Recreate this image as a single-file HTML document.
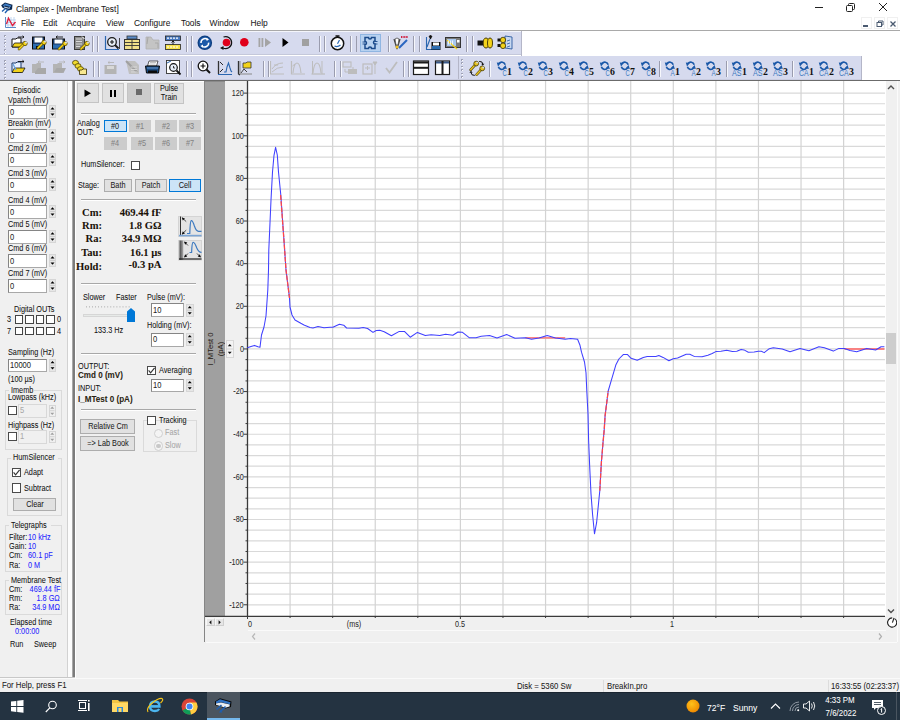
<!DOCTYPE html><html><head><meta charset="utf-8"><style>
*{margin:0;padding:0;box-sizing:border-box}
html,body{width:900px;height:720px;overflow:hidden;background:#f0f0f0;font-family:"Liberation Sans",sans-serif;color:#000;position:relative}
.a{position:absolute}
.t{position:absolute;white-space:nowrap;color:#111;-webkit-text-stroke:0.05px currentColor}

.spin{position:absolute;background:#e8e8e8;border:1px solid #d0d0d0}
.btn{position:absolute;background:#e1e1e1;border:1px solid #adadad}
.cb{position:absolute;background:#fff;border:1px solid #333}
.grp{position:absolute;border:1px solid #dcdcdc}
svg{position:absolute;overflow:visible}
</style></head><body>
<div class="a" style="left:0px;top:0px;width:900px;height:30px;background:#fff"></div>
<div class="a" style="left:0px;top:30px;width:900px;height:1px;background:#a9a9a9"></div>
<div class="a" style="left:0px;top:31px;width:900px;height:49px;background:#fff"></div>
<div class="a" style="left:0px;top:80px;width:900px;height:1px;background:#6b6b6b"></div>
<svg style="left:0;top:1px" width="14" height="13"><path d="M1.2 4.2 L5 1.5 L12.5 3.8 L12 8.5 L8.5 9.5 L2.5 6.8 Z" fill="#0e2a50"/><path d="M3 4.2 L5.5 2.6 L11.2 4.5 L10.8 6 L5 4.6 L3.6 5.4 Z" fill="#3f7fc8"/><path d="M4 6 L8.5 7.2 L10 6.8" stroke="#c8d8ea" stroke-width="1" fill="none"/><path d="M5.5 7.5 L2 10.5 M8 8.5 L5 12" stroke="#1f5fb0" stroke-width="1.4"/></svg>
<div class="t" style="left:16px;top:4.59px;font-size:8.4px;line-height:8.4px;transform-origin:left;color:#1a1a1a">Clampex - [Membrane Test]</div>
<div class="a" style="left:815px;top:7px;width:8px;height:1px;background:#222"></div>
<svg style="left:845px;top:2px" width="11" height="11"><rect x="1.5" y="3.5" width="6" height="6" rx="1" fill="none" stroke="#222" stroke-width="1"/><path d="M3.5 3.5 V2.5 Q3.5 1.5 4.5 1.5 H8.5 Q9.5 1.5 9.5 2.5 V6.5 Q9.5 7.5 8.5 7.5 H7.5" fill="none" stroke="#222" stroke-width="1"/></svg>
<svg style="left:878px;top:2px" width="10" height="10"><path d="M1 1 L9 9 M9 1 L1 9" stroke="#222" stroke-width="1"/></svg>
<div class="a" style="left:861px;top:17px;width:11px;height:12px;background:#fff;border:1px solid #f0f0f0"></div>
<div class="a" style="left:874px;top:17px;width:11px;height:12px;background:#fff;border:1px solid #f0f0f0"></div>
<div class="a" style="left:887px;top:17px;width:11px;height:12px;background:#fff;border:1px solid #f0f0f0"></div>
<div class="a" style="left:863px;top:25px;width:5px;height:1.5px;background:#4a5a70"></div>
<svg style="left:876px;top:20px" width="8" height="8"><rect x="1" y="2.5" width="4.5" height="4" fill="none" stroke="#4a5a70" stroke-width="1"/><path d="M2.5 2.5 V1 H7 V5 H5.5" fill="none" stroke="#4a5a70" stroke-width="1"/></svg>
<svg style="left:889px;top:20px" width="8" height="8"><path d="M1.5 1.5 L6.5 6.5 M6.5 1.5 L1.5 6.5" stroke="#4a5a70" stroke-width="1.3"/></svg>
<svg style="left:5px;top:17px" width="11" height="11"><path d="M0.5 0 V10.5 H11" stroke="#5a8ac8" stroke-width="1" fill="none"/><path d="M3 0 V10 M6 0 V10 M9 0 V10 M0.5 3 H11 M0.5 5.5 H11 M0.5 8 H11" stroke="#a8c4e8" stroke-width="0.7"/><path d="M1.5 7 L3.5 1.2 L7.5 8.5 L10.5 5" stroke="#e02040" stroke-width="1.3" fill="none"/></svg>
<div class="t" style="left:21px;top:19.09px;font-size:8.4px;line-height:8.4px;transform-origin:left;color:#1a1a1a">File</div>
<div class="t" style="left:43px;top:19.09px;font-size:8.4px;line-height:8.4px;transform-origin:left;color:#1a1a1a">Edit</div>
<div class="t" style="left:67px;top:19.09px;font-size:8.4px;line-height:8.4px;transform-origin:left;color:#1a1a1a">Acquire</div>
<div class="t" style="left:106px;top:19.09px;font-size:8.4px;line-height:8.4px;transform-origin:left;color:#1a1a1a">View</div>
<div class="t" style="left:134px;top:19.09px;font-size:8.4px;line-height:8.4px;transform-origin:left;color:#1a1a1a">Configure</div>
<div class="t" style="left:181px;top:19.09px;font-size:8.4px;line-height:8.4px;transform-origin:left;color:#1a1a1a">Tools</div>
<div class="t" style="left:209.5px;top:19.09px;font-size:8.4px;line-height:8.4px;transform-origin:left;color:#1a1a1a">Window</div>
<div class="t" style="left:250.5px;top:19.09px;font-size:8.4px;line-height:8.4px;transform-origin:left;color:#1a1a1a">Help</div>
<div class="a" style="left:0px;top:31px;width:521px;height:24px;background:#d6daee;border-top:1px solid #f4f5fb"></div>
<div class="a" style="left:0px;top:54px;width:521px;height:1px;background:#c4c8da"></div>
<div class="a" style="left:0px;top:55px;width:900px;height:1px;background:#fff"></div>
<div class="a" style="left:0px;top:56px;width:458px;height:23px;background:#d6daee"></div>
<div class="a" style="left:458px;top:56px;width:403px;height:23px;background:#d6daee"></div>
<div class="a" style="left:0px;top:79px;width:861px;height:1px;background:#c9cce0"></div>
<div class="a" style="left:4px;top:35.3px;width:1.5px;height:1.5px;background:#9fa2b6"></div>
<div class="a" style="left:4.8px;top:36.099999999999994px;width:1px;height:1px;background:#fff"></div>
<div class="a" style="left:4px;top:38.75px;width:1.5px;height:1.5px;background:#9fa2b6"></div>
<div class="a" style="left:4.8px;top:39.55px;width:1px;height:1px;background:#fff"></div>
<div class="a" style="left:4px;top:42.199999999999996px;width:1.5px;height:1.5px;background:#9fa2b6"></div>
<div class="a" style="left:4.8px;top:42.99999999999999px;width:1px;height:1px;background:#fff"></div>
<div class="a" style="left:4px;top:45.65px;width:1.5px;height:1.5px;background:#9fa2b6"></div>
<div class="a" style="left:4.8px;top:46.449999999999996px;width:1px;height:1px;background:#fff"></div>
<div class="a" style="left:4px;top:49.099999999999994px;width:1.5px;height:1.5px;background:#9fa2b6"></div>
<div class="a" style="left:4.8px;top:49.89999999999999px;width:1px;height:1px;background:#fff"></div>
<div class="a" style="left:4px;top:52.55px;width:1.5px;height:1.5px;background:#9fa2b6"></div>
<div class="a" style="left:4.8px;top:53.349999999999994px;width:1px;height:1px;background:#fff"></div>
<div class="a" style="left:4px;top:60.0px;width:1.5px;height:1.5px;background:#9fa2b6"></div>
<div class="a" style="left:4.8px;top:60.8px;width:1px;height:1px;background:#fff"></div>
<div class="a" style="left:4px;top:63.45px;width:1.5px;height:1.5px;background:#9fa2b6"></div>
<div class="a" style="left:4.8px;top:64.25px;width:1px;height:1px;background:#fff"></div>
<div class="a" style="left:4px;top:66.9px;width:1.5px;height:1.5px;background:#9fa2b6"></div>
<div class="a" style="left:4.8px;top:67.7px;width:1px;height:1px;background:#fff"></div>
<div class="a" style="left:4px;top:70.35px;width:1.5px;height:1.5px;background:#9fa2b6"></div>
<div class="a" style="left:4.8px;top:71.14999999999999px;width:1px;height:1px;background:#fff"></div>
<div class="a" style="left:4px;top:73.8px;width:1.5px;height:1.5px;background:#9fa2b6"></div>
<div class="a" style="left:4.8px;top:74.6px;width:1px;height:1px;background:#fff"></div>
<div class="a" style="left:4px;top:77.25px;width:1.5px;height:1.5px;background:#9fa2b6"></div>
<div class="a" style="left:4.8px;top:78.05px;width:1px;height:1px;background:#fff"></div>
<svg style="left:11px;top:35px" width="16" height="16"><path d="M1 4 H5 L6 3 H10 V12 H1 Z" fill="#fff" stroke="#111" stroke-width="1"/><path d="M1 12 L3.5 8 H13 L10.5 12 Z" fill="#f2d21a" stroke="#111" stroke-width="0.8"/><path d="M7 2 H13 M11.5 0.8 L13 2 L11.5 3.2" stroke="#111" stroke-width="0.9" fill="none"/><path d="M8 14 L13 9" stroke="#5a4a00" stroke-width="2.6" stroke-linecap="round"/><path d="M8 14 L13 9" stroke="#f4d41c" stroke-width="1.6" stroke-linecap="round"/><circle cx="14" cy="8.5" r="2.2" fill="#f4d41c" stroke="#5a4a00" stroke-width="0.8"/><circle cx="15" cy="7.5" r="1" fill="#d6daee"/></svg>
<svg style="left:32px;top:35px" width="16" height="16"><rect x="0.5" y="2" width="12" height="12" fill="#1a3a6a" stroke="#0a0a0a" stroke-width="1"/><rect x="2.5" y="2.5" width="8" height="5" fill="#fff"/><rect x="1" y="9" width="11" height="4.5" fill="#2c6cb0"/><rect x="4" y="11" width="4" height="3" fill="#0a0a0a"/><path d="M6 13 L11 8" stroke="#5a4a00" stroke-width="2.6" stroke-linecap="round"/><path d="M6 13 L11 8" stroke="#f4d41c" stroke-width="1.6" stroke-linecap="round"/><circle cx="12" cy="7.5" r="2.2" fill="#f4d41c" stroke="#5a4a00" stroke-width="0.8"/><circle cx="13" cy="6.5" r="1" fill="#d6daee"/></svg>
<svg style="left:52px;top:35px" width="16" height="16"><rect x="0.5" y="4" width="12" height="10" fill="#1a3a6a" stroke="#0a0a0a" stroke-width="1"/><rect x="2.5" y="4.5" width="8" height="4" fill="#fff"/><rect x="1" y="9.5" width="11" height="4" fill="#2c6cb0"/><path d="M4 2 H11 M5.5 0.8 L4 2 L5.5 3.2" stroke="#111" stroke-width="0.9" fill="none"/><path d="M7 14 L12 9" stroke="#5a4a00" stroke-width="2.6" stroke-linecap="round"/><path d="M7 14 L12 9" stroke="#f4d41c" stroke-width="1.6" stroke-linecap="round"/><circle cx="13" cy="8.5" r="2.2" fill="#f4d41c" stroke="#5a4a00" stroke-width="0.8"/><circle cx="14" cy="7.5" r="1" fill="#d6daee"/></svg>
<svg style="left:74px;top:35px" width="16" height="16"><rect x="0.5" y="1.5" width="10" height="13" fill="#8a8a8a" stroke="#3a3a3a" stroke-width="1"/><path d="M2 4 H8 M2 6.5 H8 M2 9 H8 M2 11.5 H6" stroke="#d8d8d8" stroke-width="1"/><path d="M8 1.5 L10.5 4" stroke="#fff" stroke-width="1"/><path d="M7 14 L12 9" stroke="#5a4a00" stroke-width="2.6" stroke-linecap="round"/><path d="M7 14 L12 9" stroke="#f4d41c" stroke-width="1.6" stroke-linecap="round"/><circle cx="13" cy="8.5" r="2.2" fill="#f4d41c" stroke="#5a4a00" stroke-width="0.8"/><circle cx="14" cy="7.5" r="1" fill="#d6daee"/></svg>
<div class="a" style="left:92px;top:36px;width:1px;height:16px;background:#9a9cae"></div>
<div class="a" style="left:93px;top:36px;width:1px;height:16px;background:#f6f7fc"></div>
<div class="a" style="left:97px;top:36px;width:1px;height:16px;background:#9a9cae"></div>
<div class="a" style="left:98px;top:36px;width:1px;height:16px;background:#f6f7fc"></div>
<svg style="left:104px;top:35px" width="16" height="16"><path d="M1.5 1 V14.5 H15" stroke="#2a66b0" stroke-width="1.2" fill="none"/><circle cx="8" cy="7" r="4.3" fill="#e8eef6" stroke="#1a1a1a" stroke-width="1.3"/><path d="M6 7 H10 M8 5 V9" stroke="#1a1a1a" stroke-width="1.1"/><path d="M11 10 L14.5 13.5" stroke="#1a1a1a" stroke-width="1.8"/><path d="M15.5 3 V14" stroke="#1a1a1a" stroke-width="0.8"/></svg>
<svg style="left:124px;top:35px" width="16" height="16"><rect x="3" y="1" width="10" height="3" fill="#5a8ac8" stroke="#333" stroke-width="0.8"/><rect x="0.5" y="4.5" width="15" height="10" fill="#f0e08a" stroke="#333" stroke-width="1"/><path d="M1 7.5 H15 M1 10.5 H15 M8 4.5 V14.5" stroke="#333" stroke-width="0.9"/></svg>
<svg style="left:145px;top:35px" width="16" height="16"><path d="M1 2 H6 L8 5 H14 V14 H1 Z" fill="#c4c4c4" stroke="#b0b0b0" stroke-width="0.8"/><path d="M3 2 L2 9 M10 8 H13 V13" stroke="#a8a8a8" stroke-width="1" fill="none"/></svg>
<svg style="left:165px;top:35px" width="16" height="16"><rect x="0.5" y="1" width="15" height="4.5" fill="#4a7ac0" stroke="#222" stroke-width="0.8"/><path d="M2 3.2 H14" stroke="#fff" stroke-width="1.2" stroke-dasharray="2 1"/><rect x="0.5" y="9.5" width="15" height="5" fill="#f6e04a" stroke="#222" stroke-width="0.8"/><path d="M2 12 H14" stroke="#fff" stroke-width="1.2" stroke-dasharray="2 1"/><path d="M8 5.5 V9.5 M6.5 7.5 L8 6 L9.5 7.5" stroke="#111" stroke-width="0.9" fill="none"/></svg>
<div class="a" style="left:186px;top:36px;width:1px;height:16px;background:#9a9cae"></div>
<div class="a" style="left:187px;top:36px;width:1px;height:16px;background:#f6f7fc"></div>
<div class="a" style="left:191px;top:36px;width:1px;height:16px;background:#9a9cae"></div>
<div class="a" style="left:192px;top:36px;width:1px;height:16px;background:#f6f7fc"></div>
<svg style="left:197px;top:35px" width="16" height="16"><circle cx="7.8" cy="7.8" r="7.3" fill="#0f3f80"/><circle cx="7.8" cy="7.8" r="6" fill="#1d5aa8"/><path d="M4 8 A4 4 0 0 1 10.5 4.5 M11.6 7.6 A4 4 0 0 1 5 11" stroke="#fff" stroke-width="1.5" fill="none"/><path d="M9.5 2.8 L12 4.5 L9.6 6 Z M6 9.6 L3.5 11 L6 12.8 Z" fill="#fff"/></svg>
<svg style="left:219px;top:35px" width="16" height="16"><circle cx="7.5" cy="7.5" r="3.8" fill="#e0001a"/><path d="M4.5 2 A6 6 0 1 1 4 13" stroke="#111" stroke-width="1.2" fill="none"/><path d="M1 13 L4.5 11 L4.5 15 Z" fill="#111"/></svg>
<svg style="left:239px;top:35px" width="16" height="16"><circle cx="5.3" cy="7.3" r="4.3" fill="#e0001a"/></svg>
<svg style="left:258px;top:35px" width="16" height="16"><rect x="0.5" y="3" width="1.8" height="9" fill="#a4a4a4"/><rect x="3.5" y="3" width="1.8" height="9" fill="#a4a4a4"/><path d="M7 3 L13 7.5 L7 12 Z" fill="#a4a4a4"/></svg>
<svg style="left:282px;top:35px" width="16" height="16"><path d="M0.5 3 L6.5 7.5 L0.5 12 Z" fill="#000"/></svg>
<svg style="left:301px;top:35px" width="16" height="16"><rect x="1" y="4" width="7" height="7" fill="#a0a0a0"/></svg>
<div class="a" style="left:319px;top:36px;width:1px;height:16px;background:#9a9cae"></div>
<div class="a" style="left:320px;top:36px;width:1px;height:16px;background:#f6f7fc"></div>
<div class="a" style="left:324px;top:36px;width:1px;height:16px;background:#9a9cae"></div>
<div class="a" style="left:325px;top:36px;width:1px;height:16px;background:#f6f7fc"></div>
<svg style="left:330px;top:35px" width="16" height="16"><circle cx="7.5" cy="8.5" r="6.2" fill="#fff" stroke="#111" stroke-width="1.5"/><path d="M5.5 1 H9.5 M7.5 1 V2.5" stroke="#111" stroke-width="1.3"/><path d="M7.5 8.8 L9.5 5 M4.5 11 Q7.5 12.5 10.5 10" stroke="#2a6ab8" stroke-width="1.2" fill="none"/></svg>
<div class="a" style="left:350px;top:36px;width:1px;height:16px;background:#9a9cae"></div>
<div class="a" style="left:351px;top:36px;width:1px;height:16px;background:#f6f7fc"></div>
<div class="a" style="left:356px;top:36px;width:1px;height:16px;background:#9a9cae"></div>
<div class="a" style="left:360px;top:33.6px;width:20.5px;height:18.5px;background:#b8d2f0;border:1px solid #90b6e2"></div>
<svg style="left:362px;top:35px" width="16" height="16"><path d="M3 2.5 H6.5 A1.5 1.5 0 0 0 9.5 2.5 H13 V6 A1.5 1.5 0 0 0 13 9 V13.5 H9.5 A1.5 1.5 0 0 0 6.5 13.5 H3 V9.5 A1.5 1.5 0 0 0 3 6.5 Z" fill="none" stroke="#1a4a8a" stroke-width="1.5"/><path d="M0.5 7 H3 M0.5 9 H3 M13 6.5 H15.5 M13 9 H15.5" stroke="#1a4a8a" stroke-width="0.9"/></svg>
<div class="a" style="left:388px;top:36px;width:1px;height:16px;background:#9a9cae"></div>
<div class="a" style="left:389px;top:36px;width:1px;height:16px;background:#f6f7fc"></div>
<svg style="left:393px;top:35px" width="16" height="16"><path d="M1 4 L4 14 M7 4 L4 14" stroke="#444" stroke-width="1.2" fill="none"/><path d="M2 4 Q4 2 6 4 L5 10 H3 Z" fill="#fff" stroke="#333" stroke-width="0.7"/><path d="M8 2 H15" stroke="#d02040" stroke-width="2" stroke-dasharray="1 0.6"/><path d="M6 13 L14 5" stroke="#2a66c0" stroke-width="2"/><circle cx="4" cy="12" r="1.5" fill="#f0c020"/></svg>
<div class="a" style="left:413px;top:36px;width:1px;height:16px;background:#9a9cae"></div>
<div class="a" style="left:414px;top:36px;width:1px;height:16px;background:#f6f7fc"></div>
<div class="a" style="left:419px;top:36px;width:1px;height:16px;background:#9a9cae"></div>
<div class="a" style="left:420px;top:36px;width:1px;height:16px;background:#f6f7fc"></div>
<svg style="left:425px;top:35px" width="16" height="16"><path d="M1.5 2 V14.5 H7" stroke="#2a66b0" stroke-width="1.1" fill="none"/><path d="M2 12 L5 4" stroke="#2a66b0" stroke-width="1.1"/><path d="M4 1 L7 1 L5.5 4Z M5.5 0 V4" stroke="#111" stroke-width="0.8" fill="#111"/><rect x="6.5" y="7" width="9" height="8" fill="#0a0a0a"/><rect x="8" y="7.5" width="6" height="3" fill="#fff"/><rect x="7" y="11" width="8" height="3.5" fill="#2c6cb0"/></svg>
<svg style="left:445px;top:35px" width="16" height="16"><rect x="0.5" y="2.5" width="15" height="10" fill="#7a7a7a" stroke="#333" stroke-width="1"/><rect x="2" y="4" width="9" height="7" fill="#a8c8f0"/><rect x="12" y="5" width="2.5" height="2.5" fill="#fff"/><path d="M2 5 L12 14" stroke="#f2d01a" stroke-width="1.3"/><path d="M3.5 5.5 V9.5 M5.5 5.5 V9.5 M7.5 5.5 V9.5" stroke="#fff" stroke-width="0.8"/></svg>
<div class="a" style="left:466px;top:36px;width:1px;height:16px;background:#9a9cae"></div>
<div class="a" style="left:467px;top:36px;width:1px;height:16px;background:#f6f7fc"></div>
<div class="a" style="left:472px;top:36px;width:1px;height:16px;background:#9a9cae"></div>
<div class="a" style="left:473px;top:36px;width:1px;height:16px;background:#f6f7fc"></div>
<svg style="left:477px;top:35px" width="16" height="16"><rect x="0.5" y="5.5" width="6" height="5" fill="#111"/><ellipse cx="9" cy="8" rx="2.8" ry="5" fill="#f2d21a" stroke="#3a3000" stroke-width="0.9"/><ellipse cx="13" cy="8" rx="2.5" ry="5" fill="#f2d21a" stroke="#3a3000" stroke-width="0.9"/></svg>
<svg style="left:497px;top:35px" width="16" height="16"><path d="M8 1 L15 2 V14 L8 13 Z" fill="#c8d8f0" stroke="#2a5aa0" stroke-width="0.9"/><path d="M10 6 L13 5 M10 9 L13 8 M10 12 L13 11" stroke="#2a5aa0" stroke-width="0.8"/><rect x="0.5" y="3.5" width="3" height="3" fill="#111"/><rect x="0.5" y="9" width="3" height="3" fill="#111"/><ellipse cx="6" cy="5" rx="2.6" ry="2.8" fill="#f2d21a" stroke="#3a3000" stroke-width="0.8"/><ellipse cx="6" cy="10.8" rx="2.6" ry="2.8" fill="#f2d21a" stroke="#3a3000" stroke-width="0.8"/></svg>
<div class="a" style="left:521px;top:31px;width:1px;height:25px;background:#b4b6c8"></div>
<svg style="left:11px;top:60px" width="16" height="16"><path d="M1 3 H5 L6 2 H10 V12 H1 Z" fill="#e6f0ff" stroke="#1a3a6a" stroke-width="1"/><path d="M1 12.5 L3.5 8 H14 L11.5 12.5 Z" fill="#f2d21a" stroke="#111" stroke-width="0.8"/><path d="M7 1.5 H13 M11.5 0.3 L13 1.5 L11.5 2.7" stroke="#111" stroke-width="0.9" fill="none"/><path d="M2 4 L5 10" stroke="#6aa0e0" stroke-width="1.4"/></svg>
<svg style="left:31px;top:60px" width="16" height="16"><path d="M1 4 H5 L6 3 H10 V13 H1 Z" fill="#b4b4b4"/><path d="M4 12 L7 8 H15 V14 H4Z" fill="#a8a8a8"/><path d="M7 2 H13 M8.5 0.8 L7 2 L8.5 3.2" stroke="#b4b4b4" stroke-width="0.9" fill="none"/></svg>
<svg style="left:52px;top:60px" width="16" height="16"><path d="M1 4 H5 L6 3 H10 V13 H1 Z" fill="#b4b4b4"/><path d="M2 12 L4.5 8 H14 L11.5 13 Z" fill="#a8a8a8"/><path d="M7 2 H13 M11.5 0.8 L13 2 L11.5 3.2" stroke="#b4b4b4" stroke-width="0.9" fill="none"/></svg>
<svg style="left:72px;top:60px" width="16" height="16"><ellipse cx="3.5" cy="2.8" rx="3" ry="2.4" fill="#f2dc30" stroke="#4a4000" stroke-width="0.8"/><ellipse cx="6" cy="6" rx="3" ry="2.4" fill="#f2dc30" stroke="#4a4000" stroke-width="0.8"/><ellipse cx="8.5" cy="9" rx="3" ry="2.4" fill="#f2dc30" stroke="#4a4000" stroke-width="0.8"/><path d="M7.5 10 H10 L11 9 H14.5 V14.5 H7.5 Z" fill="#f8e890" stroke="#3a3000" stroke-width="0.8"/></svg>
<div class="a" style="left:93px;top:61px;width:1px;height:16px;background:#9a9cae"></div>
<div class="a" style="left:94px;top:61px;width:1px;height:16px;background:#f6f7fc"></div>
<div class="a" style="left:98px;top:61px;width:1px;height:16px;background:#9a9cae"></div>
<div class="a" style="left:99px;top:61px;width:1px;height:16px;background:#f6f7fc"></div>
<svg style="left:104px;top:60px" width="16" height="16"><rect x="0.5" y="5" width="12" height="9" fill="#b4b4b4"/><rect x="3" y="6" width="7" height="3" fill="#d8d8d8"/><path d="M4 2.5 H10 M5.5 1.3 L4 2.5 L5.5 3.7" stroke="#b4b4b4" stroke-width="0.9" fill="none"/></svg>
<svg style="left:125px;top:60px" width="16" height="16"><path d="M1 1 L10 1 L14 5 V14 H4 Z" fill="#c0c0c0"/><path d="M1 1 L12 12" stroke="#a0a0a0" stroke-width="2"/><path d="M6 7 H12 M6 9.5 H12 M6 12 H12" stroke="#dadada" stroke-width="0.9"/></svg>
<svg style="left:145px;top:60px" width="16" height="16"><path d="M4 1 H13 L11.5 6 H2.5 Z" fill="#fff" stroke="#333" stroke-width="0.8"/><path d="M5 2.5 H11 M4.5 4 H10.5" stroke="#999" stroke-width="0.6"/><path d="M0.5 6 H14.5 L13.5 13 H1.5 Z" fill="#1a4a80" stroke="#0a0a0a" stroke-width="1"/><rect x="3" y="10.5" width="9" height="2.5" fill="#0a0a0a"/><path d="M2 8 H13" stroke="#6a9ad0" stroke-width="1"/></svg>
<svg style="left:166px;top:60px" width="16" height="16"><rect x="0.5" y="0.5" width="13" height="13" fill="#fff" stroke="#333" stroke-width="0.9"/><path d="M1 3 L5 1" stroke="#2a66b0" stroke-width="1"/><circle cx="7.5" cy="7.5" r="3.8" fill="#e6eef8" stroke="#111" stroke-width="1.2"/><path d="M7.5 6 V8 H9" stroke="#111" stroke-width="0.8" fill="none"/><path d="M10.5 10.5 L14.5 14.5" stroke="#111" stroke-width="1.8"/></svg>
<div class="a" style="left:186px;top:61px;width:1px;height:16px;background:#9a9cae"></div>
<div class="a" style="left:187px;top:61px;width:1px;height:16px;background:#f6f7fc"></div>
<div class="a" style="left:191px;top:61px;width:1px;height:16px;background:#9a9cae"></div>
<div class="a" style="left:192px;top:61px;width:1px;height:16px;background:#f6f7fc"></div>
<svg style="left:197px;top:60px" width="16" height="16"><circle cx="6" cy="6" r="4.8" fill="#fff" stroke="#111" stroke-width="1.3"/><path d="M3.5 6 H8.5 M6 3.5 V8.5" stroke="#111" stroke-width="1.2"/><path d="M9.5 9.5 L13 13" stroke="#111" stroke-width="2"/></svg>
<svg style="left:217px;top:60px" width="16" height="16"><path d="M1.5 1 V14" stroke="#333" stroke-width="1.3"/><path d="M3 2 L6 5 M3 12 L6 9" stroke="#111" stroke-width="0.9"/><path d="M7 12 L9 12 L10 7 L11.5 3 L13 8 L14 11 L15 12" stroke="#2a66b0" stroke-width="1.1" fill="none"/><path d="M1 14.5 H15" stroke="#2a66b0" stroke-width="1"/></svg>
<svg style="left:237px;top:60px" width="16" height="16"><path d="M1.5 1 V14 L3 15" stroke="#333" stroke-width="1.3" fill="none"/><path d="M3 1 V14 H15" stroke="#8a8a8a" stroke-width="1" fill="none"/><path d="M6 3 H9 L10 2 H14 V8 H6 Z" fill="#f2d21a" stroke="#333" stroke-width="0.8"/><path d="M4 13 L7 9 L10 12" stroke="#333" stroke-width="0.9" fill="none"/></svg>
<div class="a" style="left:263px;top:61px;width:1px;height:16px;background:#9a9cae"></div>
<div class="a" style="left:264px;top:61px;width:1px;height:16px;background:#f6f7fc"></div>
<div class="a" style="left:268px;top:61px;width:1px;height:16px;background:#9a9cae"></div>
<div class="a" style="left:269px;top:61px;width:1px;height:16px;background:#f6f7fc"></div>
<svg style="left:269px;top:60px" width="16" height="16"><path d="M1.5 1 V14 H15" stroke="#bdbdbd" stroke-width="1.2" fill="none"/><path d="M3 9 Q7 3 14 3 M3 12 Q8 7 14 7 M5 5 H9" stroke="#bdbdbd" stroke-width="1" fill="none"/></svg>
<svg style="left:290px;top:60px" width="16" height="16"><path d="M1.5 1 V14 H15" stroke="#bdbdbd" stroke-width="1.2" fill="none"/><path d="M3 13 Q4 3 7 3 Q10 3 11 13" stroke="#bdbdbd" stroke-width="1.1" fill="none"/><path d="M2.5 6 L5 4" stroke="#bdbdbd" stroke-width="1"/></svg>
<svg style="left:310px;top:60px" width="16" height="16"><path d="M1.5 14 H15" stroke="#bdbdbd" stroke-width="1.2" fill="none"/><path d="M3 13 Q4 3 7 3 Q10 3 11 13" stroke="#bdbdbd" stroke-width="1.1" fill="none"/><path d="M2.5 1 V14 M12 1 V14" stroke="#bdbdbd" stroke-width="1"/></svg>
<div class="a" style="left:334px;top:61px;width:1px;height:16px;background:#9a9cae"></div>
<div class="a" style="left:335px;top:61px;width:1px;height:16px;background:#f6f7fc"></div>
<div class="a" style="left:340px;top:61px;width:1px;height:16px;background:#9a9cae"></div>
<div class="a" style="left:341px;top:61px;width:1px;height:16px;background:#f6f7fc"></div>
<svg style="left:342px;top:60px" width="16" height="16"><rect x="1" y="2" width="8" height="5" fill="none" stroke="#bdbdbd" stroke-width="1.1"/><rect x="6" y="9" width="9" height="5" fill="#bdbdbd"/><path d="M11 7 V9 M3 9 V12 H6" stroke="#bdbdbd" stroke-width="1" fill="none"/></svg>
<svg style="left:362px;top:60px" width="16" height="16"><rect x="1" y="4" width="9" height="10" fill="none" stroke="#bdbdbd" stroke-width="1.2"/><path d="M3 8 H8 M5.5 6 V10" stroke="#bdbdbd" stroke-width="1"/><path d="M11 2 H15 L13 5 Z M13 5 V14" stroke="#bdbdbd" stroke-width="1" fill="#bdbdbd"/></svg>
<svg style="left:385px;top:60px" width="16" height="16"><path d="M1 8 L4.5 12.5 L12 2" stroke="#bdbdbd" stroke-width="1.8" fill="none"/></svg>
<div class="a" style="left:403px;top:61px;width:1px;height:16px;background:#9a9cae"></div>
<div class="a" style="left:404px;top:61px;width:1px;height:16px;background:#f6f7fc"></div>
<div class="a" style="left:408px;top:61px;width:1px;height:16px;background:#9a9cae"></div>
<div class="a" style="left:409px;top:61px;width:1px;height:16px;background:#f6f7fc"></div>
<svg style="left:413px;top:60px" width="16" height="16"><rect x="0.5" y="1" width="15" height="13.5" fill="#fff" stroke="#1a1a1a" stroke-width="1.2"/><rect x="1" y="1.5" width="14" height="2" fill="#1a1a1a"/><path d="M0.5 7.8 H15.5" stroke="#1a1a1a" stroke-width="2"/></svg>
<svg style="left:435px;top:60px" width="16" height="16"><rect x="0.5" y="1" width="14" height="13.5" fill="#fff" stroke="#1a1a1a" stroke-width="1.2"/><rect x="1" y="1.5" width="13" height="2" fill="#3a5a8a"/><path d="M7.5 1 V14.5" stroke="#1a1a1a" stroke-width="2"/></svg>
<div class="a" style="left:458px;top:56px;width:1px;height:23px;background:#b4b6c8"></div>
<div class="a" style="left:461px;top:59.0px;width:1.5px;height:1.5px;background:#9fa2b6"></div>
<div class="a" style="left:461.8px;top:59.8px;width:1px;height:1px;background:#fff"></div>
<div class="a" style="left:461px;top:62.45px;width:1.5px;height:1.5px;background:#9fa2b6"></div>
<div class="a" style="left:461.8px;top:63.25px;width:1px;height:1px;background:#fff"></div>
<div class="a" style="left:461px;top:65.9px;width:1.5px;height:1.5px;background:#9fa2b6"></div>
<div class="a" style="left:461.8px;top:66.7px;width:1px;height:1px;background:#fff"></div>
<div class="a" style="left:461px;top:69.35px;width:1.5px;height:1.5px;background:#9fa2b6"></div>
<div class="a" style="left:461.8px;top:70.15px;width:1px;height:1px;background:#fff"></div>
<div class="a" style="left:461px;top:72.8px;width:1.5px;height:1.5px;background:#9fa2b6"></div>
<div class="a" style="left:461.8px;top:73.6px;width:1px;height:1px;background:#fff"></div>
<div class="a" style="left:461px;top:76.25px;width:1.5px;height:1.5px;background:#9fa2b6"></div>
<div class="a" style="left:461.8px;top:77.05px;width:1px;height:1px;background:#fff"></div>
<svg style="left:469px;top:60px" width="16" height="16"><path d="M1.6 9.8 L6.4 4.6 M7.6 14.6 L12.4 9.4" stroke="#4a3c00" stroke-width="2.6" stroke-linecap="round"/><path d="M1.6 9.8 L6.4 4.6 M7.6 14.6 L12.4 9.4" stroke="#e6c422" stroke-width="1.5" stroke-linecap="round"/><circle cx="7.2" cy="3.6" r="2.4" fill="#e6c422" stroke="#4a3c00" stroke-width="0.8"/><circle cx="13.2" cy="8.4" r="2.4" fill="#e6c422" stroke="#4a3c00" stroke-width="0.8"/><circle cx="8.1" cy="2.6" r="0.9" fill="#d6daee"/><circle cx="14.1" cy="7.4" r="0.9" fill="#d6daee"/><path d="M10.2 1.4 Q13.6 1.2 13.8 4" stroke="#111" stroke-width="1" fill="none"/><path d="M12.2 3.8 L15.4 3.8 L13.8 5.8 Z" fill="#111"/><path d="M5.8 15.4 Q2.2 15.6 2 12.6" stroke="#111" stroke-width="1" fill="none"/><path d="M0.4 12.8 L3.6 12.8 L2 10.8 Z" fill="#111"/></svg>
<div class="a" style="left:489px;top:61px;width:1px;height:16px;background:#9a9cae"></div>
<div class="a" style="left:490px;top:61px;width:1px;height:16px;background:#f6f7fc"></div>
<svg style="left:496.0px;top:60px" width="20" height="16"><path d="M9.2 4.8 A3.5 3.5 0 0 0 3 3.6 M2.4 6.8 A3.5 3.5 0 0 0 8.6 8" stroke="#1a58a8" stroke-width="1.6" fill="none"/><path d="M0.8 2.4 L4.9 3.1 L2 6.5 Z M10.8 9 L6.7 8.3 L9.6 4.9 Z" fill="#1a58a8"/><text x="6.6" y="15.5" font-family="Liberation Sans" font-size="8.2" fill="#3a78c0" textLength="4.2" lengthAdjust="spacingAndGlyphs">C</text><text x="10.9" y="15.2" font-family="Liberation Serif" font-size="9.8" font-weight="bold" fill="#111">1</text></svg>
<svg style="left:516.5px;top:60px" width="20" height="16"><path d="M9.2 4.8 A3.5 3.5 0 0 0 3 3.6 M2.4 6.8 A3.5 3.5 0 0 0 8.6 8" stroke="#1a58a8" stroke-width="1.6" fill="none"/><path d="M0.8 2.4 L4.9 3.1 L2 6.5 Z M10.8 9 L6.7 8.3 L9.6 4.9 Z" fill="#1a58a8"/><text x="6.6" y="15.5" font-family="Liberation Sans" font-size="8.2" fill="#3a78c0" textLength="4.2" lengthAdjust="spacingAndGlyphs">C</text><text x="10.9" y="15.2" font-family="Liberation Serif" font-size="9.8" font-weight="bold" fill="#111">2</text></svg>
<svg style="left:537.0px;top:60px" width="20" height="16"><path d="M9.2 4.8 A3.5 3.5 0 0 0 3 3.6 M2.4 6.8 A3.5 3.5 0 0 0 8.6 8" stroke="#1a58a8" stroke-width="1.6" fill="none"/><path d="M0.8 2.4 L4.9 3.1 L2 6.5 Z M10.8 9 L6.7 8.3 L9.6 4.9 Z" fill="#1a58a8"/><text x="6.6" y="15.5" font-family="Liberation Sans" font-size="8.2" fill="#3a78c0" textLength="4.2" lengthAdjust="spacingAndGlyphs">C</text><text x="10.9" y="15.2" font-family="Liberation Serif" font-size="9.8" font-weight="bold" fill="#111">3</text></svg>
<svg style="left:557.5px;top:60px" width="20" height="16"><path d="M9.2 4.8 A3.5 3.5 0 0 0 3 3.6 M2.4 6.8 A3.5 3.5 0 0 0 8.6 8" stroke="#1a58a8" stroke-width="1.6" fill="none"/><path d="M0.8 2.4 L4.9 3.1 L2 6.5 Z M10.8 9 L6.7 8.3 L9.6 4.9 Z" fill="#1a58a8"/><text x="6.6" y="15.5" font-family="Liberation Sans" font-size="8.2" fill="#3a78c0" textLength="4.2" lengthAdjust="spacingAndGlyphs">C</text><text x="10.9" y="15.2" font-family="Liberation Serif" font-size="9.8" font-weight="bold" fill="#111">4</text></svg>
<svg style="left:578.0px;top:60px" width="20" height="16"><path d="M9.2 4.8 A3.5 3.5 0 0 0 3 3.6 M2.4 6.8 A3.5 3.5 0 0 0 8.6 8" stroke="#1a58a8" stroke-width="1.6" fill="none"/><path d="M0.8 2.4 L4.9 3.1 L2 6.5 Z M10.8 9 L6.7 8.3 L9.6 4.9 Z" fill="#1a58a8"/><text x="6.6" y="15.5" font-family="Liberation Sans" font-size="8.2" fill="#3a78c0" textLength="4.2" lengthAdjust="spacingAndGlyphs">C</text><text x="10.9" y="15.2" font-family="Liberation Serif" font-size="9.8" font-weight="bold" fill="#111">5</text></svg>
<svg style="left:598.5px;top:60px" width="20" height="16"><path d="M9.2 4.8 A3.5 3.5 0 0 0 3 3.6 M2.4 6.8 A3.5 3.5 0 0 0 8.6 8" stroke="#1a58a8" stroke-width="1.6" fill="none"/><path d="M0.8 2.4 L4.9 3.1 L2 6.5 Z M10.8 9 L6.7 8.3 L9.6 4.9 Z" fill="#1a58a8"/><text x="6.6" y="15.5" font-family="Liberation Sans" font-size="8.2" fill="#3a78c0" textLength="4.2" lengthAdjust="spacingAndGlyphs">C</text><text x="10.9" y="15.2" font-family="Liberation Serif" font-size="9.8" font-weight="bold" fill="#111">6</text></svg>
<svg style="left:619.0px;top:60px" width="20" height="16"><path d="M9.2 4.8 A3.5 3.5 0 0 0 3 3.6 M2.4 6.8 A3.5 3.5 0 0 0 8.6 8" stroke="#1a58a8" stroke-width="1.6" fill="none"/><path d="M0.8 2.4 L4.9 3.1 L2 6.5 Z M10.8 9 L6.7 8.3 L9.6 4.9 Z" fill="#1a58a8"/><text x="6.6" y="15.5" font-family="Liberation Sans" font-size="8.2" fill="#3a78c0" textLength="4.2" lengthAdjust="spacingAndGlyphs">C</text><text x="10.9" y="15.2" font-family="Liberation Serif" font-size="9.8" font-weight="bold" fill="#111">7</text></svg>
<svg style="left:639.5px;top:60px" width="20" height="16"><path d="M9.2 4.8 A3.5 3.5 0 0 0 3 3.6 M2.4 6.8 A3.5 3.5 0 0 0 8.6 8" stroke="#1a58a8" stroke-width="1.6" fill="none"/><path d="M0.8 2.4 L4.9 3.1 L2 6.5 Z M10.8 9 L6.7 8.3 L9.6 4.9 Z" fill="#1a58a8"/><text x="6.6" y="15.5" font-family="Liberation Sans" font-size="8.2" fill="#3a78c0" textLength="4.2" lengthAdjust="spacingAndGlyphs">C</text><text x="10.9" y="15.2" font-family="Liberation Serif" font-size="9.8" font-weight="bold" fill="#111">8</text></svg>
<div class="a" style="left:659px;top:61px;width:1px;height:16px;background:#9a9cae"></div>
<div class="a" style="left:660px;top:61px;width:1px;height:16px;background:#f6f7fc"></div>
<svg style="left:664.0px;top:60px" width="20" height="16"><path d="M9.2 4.8 A3.5 3.5 0 0 0 3 3.6 M2.4 6.8 A3.5 3.5 0 0 0 8.6 8" stroke="#1a58a8" stroke-width="1.6" fill="none"/><path d="M0.8 2.4 L4.9 3.1 L2 6.5 Z M10.8 9 L6.7 8.3 L9.6 4.9 Z" fill="#1a58a8"/><text x="6.6" y="15.5" font-family="Liberation Sans" font-size="8.2" fill="#3a78c0" textLength="4.2" lengthAdjust="spacingAndGlyphs">A</text><text x="10.9" y="15.2" font-family="Liberation Serif" font-size="9.8" font-weight="bold" fill="#111">1</text></svg>
<svg style="left:684.7px;top:60px" width="20" height="16"><path d="M9.2 4.8 A3.5 3.5 0 0 0 3 3.6 M2.4 6.8 A3.5 3.5 0 0 0 8.6 8" stroke="#1a58a8" stroke-width="1.6" fill="none"/><path d="M0.8 2.4 L4.9 3.1 L2 6.5 Z M10.8 9 L6.7 8.3 L9.6 4.9 Z" fill="#1a58a8"/><text x="6.6" y="15.5" font-family="Liberation Sans" font-size="8.2" fill="#3a78c0" textLength="4.2" lengthAdjust="spacingAndGlyphs">A</text><text x="10.9" y="15.2" font-family="Liberation Serif" font-size="9.8" font-weight="bold" fill="#111">2</text></svg>
<svg style="left:705.4px;top:60px" width="20" height="16"><path d="M9.2 4.8 A3.5 3.5 0 0 0 3 3.6 M2.4 6.8 A3.5 3.5 0 0 0 8.6 8" stroke="#1a58a8" stroke-width="1.6" fill="none"/><path d="M0.8 2.4 L4.9 3.1 L2 6.5 Z M10.8 9 L6.7 8.3 L9.6 4.9 Z" fill="#1a58a8"/><text x="6.6" y="15.5" font-family="Liberation Sans" font-size="8.2" fill="#3a78c0" textLength="4.2" lengthAdjust="spacingAndGlyphs">A</text><text x="10.9" y="15.2" font-family="Liberation Serif" font-size="9.8" font-weight="bold" fill="#111">3</text></svg>
<div class="a" style="left:726px;top:61px;width:1px;height:16px;background:#9a9cae"></div>
<div class="a" style="left:727px;top:61px;width:1px;height:16px;background:#f6f7fc"></div>
<svg style="left:731.0px;top:60px" width="20" height="16"><path d="M9.2 4.8 A3.5 3.5 0 0 0 3 3.6 M2.4 6.8 A3.5 3.5 0 0 0 8.6 8" stroke="#1a58a8" stroke-width="1.6" fill="none"/><path d="M0.8 2.4 L4.9 3.1 L2 6.5 Z M10.8 9 L6.7 8.3 L9.6 4.9 Z" fill="#1a58a8"/><text x="1" y="15.5" font-family="Liberation Sans" font-size="8.2" fill="#3a78c0" textLength="9.6" lengthAdjust="spacingAndGlyphs">AS</text><text x="10.9" y="15.2" font-family="Liberation Serif" font-size="9.8" font-weight="bold" fill="#111">1</text></svg>
<svg style="left:751.5px;top:60px" width="20" height="16"><path d="M9.2 4.8 A3.5 3.5 0 0 0 3 3.6 M2.4 6.8 A3.5 3.5 0 0 0 8.6 8" stroke="#1a58a8" stroke-width="1.6" fill="none"/><path d="M0.8 2.4 L4.9 3.1 L2 6.5 Z M10.8 9 L6.7 8.3 L9.6 4.9 Z" fill="#1a58a8"/><text x="1" y="15.5" font-family="Liberation Sans" font-size="8.2" fill="#3a78c0" textLength="9.6" lengthAdjust="spacingAndGlyphs">AS</text><text x="10.9" y="15.2" font-family="Liberation Serif" font-size="9.8" font-weight="bold" fill="#111">2</text></svg>
<svg style="left:772.0px;top:60px" width="20" height="16"><path d="M9.2 4.8 A3.5 3.5 0 0 0 3 3.6 M2.4 6.8 A3.5 3.5 0 0 0 8.6 8" stroke="#1a58a8" stroke-width="1.6" fill="none"/><path d="M0.8 2.4 L4.9 3.1 L2 6.5 Z M10.8 9 L6.7 8.3 L9.6 4.9 Z" fill="#1a58a8"/><text x="1" y="15.5" font-family="Liberation Sans" font-size="8.2" fill="#3a78c0" textLength="9.6" lengthAdjust="spacingAndGlyphs">AS</text><text x="10.9" y="15.2" font-family="Liberation Serif" font-size="9.8" font-weight="bold" fill="#111">3</text></svg>
<div class="a" style="left:792px;top:61px;width:1px;height:16px;background:#9a9cae"></div>
<div class="a" style="left:793px;top:61px;width:1px;height:16px;background:#f6f7fc"></div>
<svg style="left:798.0px;top:60px" width="20" height="16"><path d="M9.2 4.8 A3.5 3.5 0 0 0 3 3.6 M2.4 6.8 A3.5 3.5 0 0 0 8.6 8" stroke="#1a58a8" stroke-width="1.6" fill="none"/><path d="M0.8 2.4 L4.9 3.1 L2 6.5 Z M10.8 9 L6.7 8.3 L9.6 4.9 Z" fill="#1a58a8"/><text x="1" y="15.5" font-family="Liberation Sans" font-size="8.2" fill="#3a78c0" textLength="9.6" lengthAdjust="spacingAndGlyphs">CA</text><text x="10.9" y="15.2" font-family="Liberation Serif" font-size="9.8" font-weight="bold" fill="#111">1</text></svg>
<svg style="left:818.2px;top:60px" width="20" height="16"><path d="M9.2 4.8 A3.5 3.5 0 0 0 3 3.6 M2.4 6.8 A3.5 3.5 0 0 0 8.6 8" stroke="#1a58a8" stroke-width="1.6" fill="none"/><path d="M0.8 2.4 L4.9 3.1 L2 6.5 Z M10.8 9 L6.7 8.3 L9.6 4.9 Z" fill="#1a58a8"/><text x="1" y="15.5" font-family="Liberation Sans" font-size="8.2" fill="#3a78c0" textLength="9.6" lengthAdjust="spacingAndGlyphs">CA</text><text x="10.9" y="15.2" font-family="Liberation Serif" font-size="9.8" font-weight="bold" fill="#111">2</text></svg>
<svg style="left:838.4px;top:60px" width="20" height="16"><path d="M9.2 4.8 A3.5 3.5 0 0 0 3 3.6 M2.4 6.8 A3.5 3.5 0 0 0 8.6 8" stroke="#1a58a8" stroke-width="1.6" fill="none"/><path d="M0.8 2.4 L4.9 3.1 L2 6.5 Z M10.8 9 L6.7 8.3 L9.6 4.9 Z" fill="#1a58a8"/><text x="1" y="15.5" font-family="Liberation Sans" font-size="8.2" fill="#3a78c0" textLength="9.6" lengthAdjust="spacingAndGlyphs">CA</text><text x="10.9" y="15.2" font-family="Liberation Serif" font-size="9.8" font-weight="bold" fill="#111">3</text></svg>
<div class="a" style="left:861px;top:56px;width:1px;height:24px;background:#b4b6c8"></div>
<div class="a" style="left:0px;top:81px;width:67px;height:597px;background:#f0f0f0"></div>
<div class="a" style="left:67px;top:81px;width:1px;height:597px;background:#d2d2d2"></div>
<div class="a" style="left:68px;top:81px;width:4px;height:597px;background:#fcfcfc"></div>
<div class="a" style="left:72px;top:81px;width:1px;height:597px;background:#a8a8a8"></div>
<div class="a" style="left:73px;top:81px;width:2px;height:597px;background:#7c7c7c"></div>
<div class="a" style="left:75px;top:81px;width:1px;height:597px;background:#fff"></div>
<div class="a" style="left:0px;top:677px;width:75px;height:1px;background:#c8c8c8"></div>
<div class="t" style="left:13px;top:85.89px;font-size:8.4px;line-height:8.4px;transform:scaleX(0.87);transform-origin:left;">Episodic</div>
<div class="t" style="left:8px;top:95.69px;font-size:8.4px;line-height:8.4px;transform:scaleX(0.87);transform-origin:left;">Vpatch (mV)</div>
<div class="a" style="left:8px;top:105px;width:39px;height:14px;background:#fff;border:1px solid #858585;border-right-color:#a8a8a8;border-bottom-color:#a8a8a8"></div>
<div class="t" style="left:10px;top:107.51px;font-size:9.2px;line-height:9.2px;transform:scaleX(0.82);transform-origin:left;color:#222">0</div>
<div class="a" style="left:49px;top:105px;width:7px;height:13px;background:#e6e6e6;border:1px solid #d6d6d6"></div>
<svg style="left:0;top:0" width="900" height="720"><path d="M50.5 109.5 L54.5 109.5 L52.5 107.3 Z M50.5 113.5 L54.5 113.5 L52.5 115.7 Z" fill="#000"/><line x1="50" y1="111.5" x2="55" y2="111.5" stroke="#c8c8c8" stroke-width="0.8"/></svg>
<div class="t" style="left:8px;top:119.49px;font-size:8.4px;line-height:8.4px;transform:scaleX(0.87);transform-origin:left;">BreakIn (mV)</div>
<div class="a" style="left:8px;top:129px;width:39px;height:14px;background:#fff;border:1px solid #858585;border-right-color:#a8a8a8;border-bottom-color:#a8a8a8"></div>
<div class="t" style="left:10px;top:131.51px;font-size:9.2px;line-height:9.2px;transform:scaleX(0.82);transform-origin:left;color:#222">0</div>
<div class="a" style="left:49px;top:129px;width:7px;height:13px;background:#e6e6e6;border:1px solid #d6d6d6"></div>
<svg style="left:0;top:0" width="900" height="720"><path d="M50.5 133.5 L54.5 133.5 L52.5 131.3 Z M50.5 137.5 L54.5 137.5 L52.5 139.7 Z" fill="#000"/><line x1="50" y1="135.5" x2="55" y2="135.5" stroke="#c8c8c8" stroke-width="0.8"/></svg>
<div class="t" style="left:8px;top:143.59px;font-size:8.4px;line-height:8.4px;transform:scaleX(0.87);transform-origin:left;">Cmd 2 (mV)</div>
<div class="a" style="left:8px;top:153px;width:39px;height:14px;background:#fff;border:1px solid #858585;border-right-color:#a8a8a8;border-bottom-color:#a8a8a8"></div>
<div class="t" style="left:10px;top:155.51px;font-size:9.2px;line-height:9.2px;transform:scaleX(0.82);transform-origin:left;color:#222">0</div>
<div class="a" style="left:49px;top:153px;width:7px;height:13px;background:#e6e6e6;border:1px solid #d6d6d6"></div>
<svg style="left:0;top:0" width="900" height="720"><path d="M50.5 157.5 L54.5 157.5 L52.5 155.3 Z M50.5 161.5 L54.5 161.5 L52.5 163.7 Z" fill="#000"/><line x1="50" y1="159.5" x2="55" y2="159.5" stroke="#c8c8c8" stroke-width="0.8"/></svg>
<div class="t" style="left:8px;top:168.59px;font-size:8.4px;line-height:8.4px;transform:scaleX(0.87);transform-origin:left;">Cmd 3 (mV)</div>
<div class="a" style="left:8px;top:178px;width:39px;height:14px;background:#fff;border:1px solid #858585;border-right-color:#a8a8a8;border-bottom-color:#a8a8a8"></div>
<div class="t" style="left:10px;top:180.51px;font-size:9.2px;line-height:9.2px;transform:scaleX(0.82);transform-origin:left;color:#222">0</div>
<div class="a" style="left:49px;top:178px;width:7px;height:13px;background:#e6e6e6;border:1px solid #d6d6d6"></div>
<svg style="left:0;top:0" width="900" height="720"><path d="M50.5 182.5 L54.5 182.5 L52.5 180.3 Z M50.5 186.5 L54.5 186.5 L52.5 188.7 Z" fill="#000"/><line x1="50" y1="184.5" x2="55" y2="184.5" stroke="#c8c8c8" stroke-width="0.8"/></svg>
<div class="t" style="left:8px;top:195.89px;font-size:8.4px;line-height:8.4px;transform:scaleX(0.87);transform-origin:left;">Cmd 4 (mV)</div>
<div class="a" style="left:8px;top:205px;width:39px;height:14px;background:#fff;border:1px solid #858585;border-right-color:#a8a8a8;border-bottom-color:#a8a8a8"></div>
<div class="t" style="left:10px;top:207.51px;font-size:9.2px;line-height:9.2px;transform:scaleX(0.82);transform-origin:left;color:#222">0</div>
<div class="a" style="left:49px;top:205px;width:7px;height:13px;background:#e6e6e6;border:1px solid #d6d6d6"></div>
<svg style="left:0;top:0" width="900" height="720"><path d="M50.5 209.5 L54.5 209.5 L52.5 207.3 Z M50.5 213.5 L54.5 213.5 L52.5 215.7 Z" fill="#000"/><line x1="50" y1="211.5" x2="55" y2="211.5" stroke="#c8c8c8" stroke-width="0.8"/></svg>
<div class="t" style="left:8px;top:219.89px;font-size:8.4px;line-height:8.4px;transform:scaleX(0.87);transform-origin:left;">Cmd 5 (mV)</div>
<div class="a" style="left:8px;top:230px;width:39px;height:14px;background:#fff;border:1px solid #858585;border-right-color:#a8a8a8;border-bottom-color:#a8a8a8"></div>
<div class="t" style="left:10px;top:232.51px;font-size:9.2px;line-height:9.2px;transform:scaleX(0.82);transform-origin:left;color:#222">0</div>
<div class="a" style="left:49px;top:230px;width:7px;height:13px;background:#e6e6e6;border:1px solid #d6d6d6"></div>
<svg style="left:0;top:0" width="900" height="720"><path d="M50.5 234.5 L54.5 234.5 L52.5 232.3 Z M50.5 238.5 L54.5 238.5 L52.5 240.7 Z" fill="#000"/><line x1="50" y1="236.5" x2="55" y2="236.5" stroke="#c8c8c8" stroke-width="0.8"/></svg>
<div class="t" style="left:8px;top:243.89px;font-size:8.4px;line-height:8.4px;transform:scaleX(0.87);transform-origin:left;">Cmd 6 (mV)</div>
<div class="a" style="left:8px;top:254px;width:39px;height:14px;background:#fff;border:1px solid #858585;border-right-color:#a8a8a8;border-bottom-color:#a8a8a8"></div>
<div class="t" style="left:10px;top:256.51px;font-size:9.2px;line-height:9.2px;transform:scaleX(0.82);transform-origin:left;color:#222">0</div>
<div class="a" style="left:49px;top:254px;width:7px;height:13px;background:#e6e6e6;border:1px solid #d6d6d6"></div>
<svg style="left:0;top:0" width="900" height="720"><path d="M50.5 258.5 L54.5 258.5 L52.5 256.3 Z M50.5 262.5 L54.5 262.5 L52.5 264.7 Z" fill="#000"/><line x1="50" y1="260.5" x2="55" y2="260.5" stroke="#c8c8c8" stroke-width="0.8"/></svg>
<div class="t" style="left:8px;top:268.89px;font-size:8.4px;line-height:8.4px;transform:scaleX(0.87);transform-origin:left;">Cmd 7 (mV)</div>
<div class="a" style="left:8px;top:279px;width:39px;height:14px;background:#fff;border:1px solid #858585;border-right-color:#a8a8a8;border-bottom-color:#a8a8a8"></div>
<div class="t" style="left:10px;top:281.51px;font-size:9.2px;line-height:9.2px;transform:scaleX(0.82);transform-origin:left;color:#222">0</div>
<div class="a" style="left:49px;top:279px;width:7px;height:13px;background:#e6e6e6;border:1px solid #d6d6d6"></div>
<svg style="left:0;top:0" width="900" height="720"><path d="M50.5 283.5 L54.5 283.5 L52.5 281.3 Z M50.5 287.5 L54.5 287.5 L52.5 289.7 Z" fill="#000"/><line x1="50" y1="285.5" x2="55" y2="285.5" stroke="#c8c8c8" stroke-width="0.8"/></svg>
<div class="t" style="left:14px;top:304.89px;font-size:8.4px;line-height:8.4px;transform:scaleX(0.87);transform-origin:left;">Digital OUTs</div>
<div class="t" style="left:7px;top:315.39px;font-size:8.4px;line-height:8.4px;transform:scaleX(0.87);transform-origin:left;">3</div>
<div class="t" style="left:56.5px;top:315.39px;font-size:8.4px;line-height:8.4px;transform:scaleX(0.87);transform-origin:left;">0</div>
<div class="t" style="left:7px;top:326.89px;font-size:8.4px;line-height:8.4px;transform:scaleX(0.87);transform-origin:left;">7</div>
<div class="t" style="left:56.5px;top:326.89px;font-size:8.4px;line-height:8.4px;transform:scaleX(0.87);transform-origin:left;">4</div>
<div class="a" style="left:14.5px;top:315px;width:8.5px;height:8.5px;background:#fff;border:1px solid #444"></div>
<div class="a" style="left:25px;top:315px;width:8.5px;height:8.5px;background:#fff;border:1px solid #444"></div>
<div class="a" style="left:35.5px;top:315px;width:8.5px;height:8.5px;background:#fff;border:1px solid #444"></div>
<div class="a" style="left:46px;top:315px;width:8.5px;height:8.5px;background:#fff;border:1px solid #444"></div>
<div class="a" style="left:14.5px;top:326.5px;width:8.5px;height:8.5px;background:#fff;border:1px solid #444"></div>
<div class="a" style="left:25px;top:326.5px;width:8.5px;height:8.5px;background:#fff;border:1px solid #444"></div>
<div class="a" style="left:35.5px;top:326.5px;width:8.5px;height:8.5px;background:#fff;border:1px solid #444"></div>
<div class="a" style="left:46px;top:326.5px;width:8.5px;height:8.5px;background:#fff;border:1px solid #444"></div>
<div class="t" style="left:8px;top:347.89px;font-size:8.4px;line-height:8.4px;transform:scaleX(0.87);transform-origin:left;">Sampling (Hz)</div>
<div class="a" style="left:8px;top:358.5px;width:39px;height:13.5px;background:#fff;border:1px solid #858585;border-right-color:#a8a8a8;border-bottom-color:#a8a8a8"></div>
<div class="t" style="left:10px;top:360.76px;font-size:9.2px;line-height:9.2px;transform:scaleX(0.82);transform-origin:left;color:#222">10000</div>
<div class="a" style="left:49px;top:359px;width:7px;height:12.5px;background:#e6e6e6;border:1px solid #d6d6d6"></div>
<svg style="left:0;top:0" width="900" height="720"><path d="M50.5 363.25 L54.5 363.25 L52.5 361.05 Z M50.5 367.25 L54.5 367.25 L52.5 369.45 Z" fill="#000"/><line x1="50" y1="365.25" x2="55" y2="365.25" stroke="#c8c8c8" stroke-width="0.8"/></svg>
<div class="t" style="left:8px;top:374.89px;font-size:8.4px;line-height:8.4px;transform:scaleX(0.87);transform-origin:left;">(100 µs)</div>
<div class="a" style="left:5px;top:389.5px;width:57px;height:60px;border:1px solid #dadada"></div>
<div class="a" style="left:9px;top:386px;width:25px;height:6px;background:#f0f0f0"></div>
<div class="t" style="left:11px;top:386.39px;font-size:8.4px;line-height:8.4px;transform:scaleX(0.87);transform-origin:left;">Imemb</div>
<div class="t" style="left:8px;top:393.39px;font-size:8.4px;line-height:8.4px;transform:scaleX(0.87);transform-origin:left;">Lowpass (kHz)</div>
<div class="a" style="left:8px;top:406px;width:8.5px;height:8.5px;background:#fff;border:1px solid #4a4a4a"></div>
<div class="a" style="left:17.5px;top:404px;width:29px;height:13.5px;background:#f0f0f0;border:1px solid #d8d8d8;"></div>
<div class="t" style="left:19.5px;top:406.26px;font-size:9.2px;line-height:9.2px;transform:scaleX(0.82);transform-origin:left;color:#a8a8a8">5</div>
<div class="a" style="left:49px;top:404.5px;width:6.5px;height:12.5px;background:#f0f0f0;border:1px solid #d6d6d6"></div>
<svg style="left:0;top:0" width="900" height="720"><path d="M50.25 408.75 L54.25 408.75 L52.25 406.55 Z M50.25 412.75 L54.25 412.75 L52.25 414.95 Z" fill="#a0a0a0"/><line x1="50" y1="410.75" x2="54.5" y2="410.75" stroke="#c8c8c8" stroke-width="0.8"/></svg>
<div class="t" style="left:8px;top:420.89px;font-size:8.4px;line-height:8.4px;transform:scaleX(0.87);transform-origin:left;">Highpass (Hz)</div>
<div class="a" style="left:8px;top:432px;width:8.5px;height:8.5px;background:#fff;border:1px solid #4a4a4a"></div>
<div class="a" style="left:17.5px;top:430px;width:29px;height:13.5px;background:#f0f0f0;border:1px solid #d8d8d8;"></div>
<div class="t" style="left:19.5px;top:432.26px;font-size:9.2px;line-height:9.2px;transform:scaleX(0.82);transform-origin:left;color:#a8a8a8">1</div>
<div class="a" style="left:49px;top:430.5px;width:6.5px;height:12.5px;background:#f0f0f0;border:1px solid #d6d6d6"></div>
<svg style="left:0;top:0" width="900" height="720"><path d="M50.25 434.75 L54.25 434.75 L52.25 432.55 Z M50.25 438.75 L54.25 438.75 L52.25 440.95 Z" fill="#a0a0a0"/><line x1="50" y1="436.75" x2="54.5" y2="436.75" stroke="#c8c8c8" stroke-width="0.8"/></svg>
<div class="a" style="left:6.5px;top:457.5px;width:55.5px;height:58px;border:1px solid #dadada"></div>
<div class="a" style="left:11px;top:453px;width:47px;height:7px;background:#f0f0f0"></div>
<div class="t" style="left:13px;top:453.39px;font-size:8.4px;line-height:8.4px;transform:scaleX(0.87);transform-origin:left;">HumSilencer</div>
<div class="a" style="left:12px;top:467.5px;width:9.3px;height:9.3px;background:#fff;border:1px solid #4a4a4a"></div>
<svg style="left:12px;top:467.5px" width="9.3" height="9.3"><path d="M1.6 4.4 L3.6 6.8 L7.6 1.8" stroke="#333" stroke-width="1.15" fill="none"/></svg>
<div class="t" style="left:23.5px;top:468.39px;font-size:8.4px;line-height:8.4px;transform:scaleX(0.87);transform-origin:left;">Adapt</div>
<div class="a" style="left:12px;top:483.3px;width:9.3px;height:9.3px;background:#fff;border:1px solid #4a4a4a"></div>
<div class="t" style="left:23.5px;top:484.39px;font-size:8.4px;line-height:8.4px;transform:scaleX(0.87);transform-origin:left;">Subtract</div>
<div class="a" style="left:13px;top:498px;width:43px;height:12.7px;background:#e1e1e1;border:1px solid #adadad"></div>
<div class="t" style="left:-65.5px;width:200px;text-align:center;top:500.14px;font-size:8.4px;line-height:8.4px;transform:scaleX(0.87);color:#222">Clear</div>
<div class="a" style="left:4.5px;top:525px;width:57.5px;height:47px;border:1px solid #dadada"></div>
<div class="a" style="left:9px;top:521px;width:42px;height:7px;background:#f0f0f0"></div>
<div class="t" style="left:11px;top:521.39px;font-size:8.4px;line-height:8.4px;transform:scaleX(0.87);transform-origin:left;">Telegraphs</div>
<div class="t" style="left:9px;top:533.39px;font-size:8.4px;line-height:8.4px;transform:scaleX(0.87);transform-origin:left;">Filter:</div>
<div class="t" style="left:28px;top:533.39px;font-size:8.4px;line-height:8.4px;transform:scaleX(0.87);transform-origin:left;color:#1f1fff">10 kHz</div>
<div class="t" style="left:9px;top:542.44px;font-size:8.4px;line-height:8.4px;transform:scaleX(0.87);transform-origin:left;">Gain:</div>
<div class="t" style="left:28px;top:542.44px;font-size:8.4px;line-height:8.4px;transform:scaleX(0.87);transform-origin:left;color:#1f1fff">10</div>
<div class="t" style="left:9px;top:551.49px;font-size:8.4px;line-height:8.4px;transform:scaleX(0.87);transform-origin:left;">Cm:</div>
<div class="t" style="left:28px;top:551.49px;font-size:8.4px;line-height:8.4px;transform:scaleX(0.87);transform-origin:left;color:#1f1fff">60.1 pF</div>
<div class="t" style="left:9px;top:560.54px;font-size:8.4px;line-height:8.4px;transform:scaleX(0.87);transform-origin:left;">Ra:</div>
<div class="t" style="left:28px;top:560.54px;font-size:8.4px;line-height:8.4px;transform:scaleX(0.87);transform-origin:left;color:#1f1fff">0 M</div>
<div class="a" style="left:4.5px;top:579.5px;width:57.5px;height:35px;border:1px solid #dadada"></div>
<div class="a" style="left:9px;top:575px;width:55px;height:7px;background:#f0f0f0"></div>
<div class="t" style="left:11px;top:576.39px;font-size:8.4px;line-height:8.4px;transform:scaleX(0.87);transform-origin:left;">Membrane Test</div>
<div class="t" style="left:9px;top:585.39px;font-size:8.4px;line-height:8.4px;transform:scaleX(0.87);transform-origin:left;">Cm:</div>
<div class="t" style="right:840px;top:585.39px;font-size:8.4px;line-height:8.4px;transform:scaleX(0.87);transform-origin:right;color:#1f1fff">469.44 fF</div>
<div class="t" style="left:9px;top:594.44px;font-size:8.4px;line-height:8.4px;transform:scaleX(0.87);transform-origin:left;">Rm:</div>
<div class="t" style="right:840px;top:594.44px;font-size:8.4px;line-height:8.4px;transform:scaleX(0.87);transform-origin:right;color:#1f1fff">1.8 GΩ</div>
<div class="t" style="left:9px;top:603.49px;font-size:8.4px;line-height:8.4px;transform:scaleX(0.87);transform-origin:left;">Ra:</div>
<div class="t" style="right:840px;top:603.49px;font-size:8.4px;line-height:8.4px;transform:scaleX(0.87);transform-origin:right;color:#1f1fff">34.9 MΩ</div>
<div class="t" style="left:10px;top:618.49px;font-size:8.4px;line-height:8.4px;transform:scaleX(0.87);transform-origin:left;">Elapsed time</div>
<div class="t" style="left:14.5px;top:627.39px;font-size:8.4px;line-height:8.4px;transform:scaleX(0.87);transform-origin:left;color:#1f1fff">0:00:00</div>
<div class="t" style="left:10px;top:639.59px;font-size:8.4px;line-height:8.4px;transform:scaleX(0.87);transform-origin:left;">Run</div>
<div class="t" style="left:34px;top:639.59px;font-size:8.4px;line-height:8.4px;transform:scaleX(0.87);transform-origin:left;">Sweep</div>
<div class="a" style="left:76px;top:81px;width:128px;height:597px;background:#f0f0f0"></div>
<div class="a" style="left:75px;top:81px;width:129px;height:1px;background:#fff"></div>
<div class="a" style="left:76.5px;top:83px;width:22px;height:20px;background:#e1e1e1;border:1px solid #c4c4c4"></div>
<svg style="left:84px;top:89px" width="8" height="9"><path d="M0.5 0.5 L7 4.2 L0.5 8 Z" fill="#000"/></svg>
<div class="a" style="left:102px;top:83px;width:22px;height:20px;background:#e1e1e1;border:1px solid #c4c4c4"></div>
<div class="a" style="left:109.5px;top:89.5px;width:2.5px;height:7px;background:#000"></div>
<div class="a" style="left:113.5px;top:89.5px;width:2.5px;height:7px;background:#000"></div>
<div class="a" style="left:127px;top:83px;width:23.5px;height:20px;background:#cccccc;border:1px solid #c4c4c4"></div>
<div class="a" style="left:135.5px;top:89px;width:6px;height:6px;background:#6a6a6a"></div>
<div class="a" style="left:154px;top:83px;width:29.5px;height:20.5px;background:#e1e1e1;border:1px solid #c4c4c4"></div>
<div class="t" style="left:68.80000000000001px;width:200px;text-align:center;top:84.39px;font-size:8.4px;line-height:8.4px;transform:scaleX(0.87);">Pulse</div>
<div class="t" style="left:68.80000000000001px;width:200px;text-align:center;top:93.19px;font-size:8.4px;line-height:8.4px;transform:scaleX(0.87);">Train</div>
<div class="a" style="left:81px;top:113px;width:115px;height:1px;background:#a8a8a8"></div>
<div class="a" style="left:81px;top:114px;width:115px;height:1px;background:#fff"></div>
<div class="t" style="left:77px;top:118.89px;font-size:8.4px;line-height:8.4px;transform:scaleX(0.87);transform-origin:left;">Analog</div>
<div class="t" style="left:77px;top:127.89px;font-size:8.4px;line-height:8.4px;transform:scaleX(0.87);transform-origin:left;">OUT:</div>
<div class="a" style="left:104px;top:119.5px;width:22.5px;height:12.5px;background:#cce4f7;border:1px solid #0078d7"></div>
<div class="t" style="left:15.25px;width:200px;text-align:center;top:121.54px;font-size:8.4px;line-height:8.4px;transform:scaleX(0.87);color:#222">#0</div>
<div class="a" style="left:129px;top:119.5px;width:22px;height:12.5px;background:#cccccc;border:1px solid #cccccc"></div>
<div class="t" style="left:40.0px;width:200px;text-align:center;top:121.54px;font-size:8.4px;line-height:8.4px;transform:scaleX(0.87);color:#838383">#1</div>
<div class="a" style="left:155px;top:119.5px;width:21.5px;height:12.5px;background:#cccccc;border:1px solid #cccccc"></div>
<div class="t" style="left:65.75px;width:200px;text-align:center;top:121.54px;font-size:8.4px;line-height:8.4px;transform:scaleX(0.87);color:#838383">#2</div>
<div class="a" style="left:179px;top:119.5px;width:22px;height:12.5px;background:#cccccc;border:1px solid #cccccc"></div>
<div class="t" style="left:90.0px;width:200px;text-align:center;top:121.54px;font-size:8.4px;line-height:8.4px;transform:scaleX(0.87);color:#838383">#3</div>
<div class="a" style="left:104px;top:137px;width:22.5px;height:12.5px;background:#cccccc;border:1px solid #cccccc"></div>
<div class="t" style="left:15.25px;width:200px;text-align:center;top:139.04px;font-size:8.4px;line-height:8.4px;transform:scaleX(0.87);color:#838383">#4</div>
<div class="a" style="left:131px;top:137px;width:21.5px;height:12.5px;background:#cccccc;border:1px solid #cccccc"></div>
<div class="t" style="left:41.75px;width:200px;text-align:center;top:139.04px;font-size:8.4px;line-height:8.4px;transform:scaleX(0.87);color:#838383">#5</div>
<div class="a" style="left:155px;top:137px;width:21.5px;height:12.5px;background:#cccccc;border:1px solid #cccccc"></div>
<div class="t" style="left:65.75px;width:200px;text-align:center;top:139.04px;font-size:8.4px;line-height:8.4px;transform:scaleX(0.87);color:#838383">#6</div>
<div class="a" style="left:179px;top:137px;width:22px;height:12.5px;background:#cccccc;border:1px solid #cccccc"></div>
<div class="t" style="left:90.0px;width:200px;text-align:center;top:139.04px;font-size:8.4px;line-height:8.4px;transform:scaleX(0.87);color:#838383">#7</div>
<div class="t" style="left:80.7px;top:159.59px;font-size:8.4px;line-height:8.4px;transform:scaleX(0.87);transform-origin:left;">HumSilencer:</div>
<div class="a" style="left:131px;top:160.5px;width:9.3px;height:9.3px;background:#fff;border:1px solid #4a4a4a"></div>
<div class="t" style="left:78px;top:181.09px;font-size:8.4px;line-height:8.4px;transform:scaleX(0.87);transform-origin:left;">Stage:</div>
<div class="a" style="left:104px;top:179px;width:28px;height:13px;background:#e1e1e1;border:1px solid #adadad"></div>
<div class="t" style="left:18.0px;width:200px;text-align:center;top:181.29px;font-size:8.4px;line-height:8.4px;transform:scaleX(0.87);color:#222">Bath</div>
<div class="a" style="left:135px;top:179px;width:32px;height:13px;background:#e1e1e1;border:1px solid #adadad"></div>
<div class="t" style="left:51.0px;width:200px;text-align:center;top:181.29px;font-size:8.4px;line-height:8.4px;transform:scaleX(0.87);color:#222">Patch</div>
<div class="a" style="left:169px;top:179px;width:32px;height:13px;background:#cce4f7;border:1px solid #0078d7"></div>
<div class="t" style="left:85.0px;width:200px;text-align:center;top:181.29px;font-size:8.4px;line-height:8.4px;transform:scaleX(0.87);color:#222">Cell</div>
<div class="a" style="left:81px;top:199.3px;width:115px;height:1px;background:#a8a8a8"></div>
<div class="a" style="left:81px;top:200.3px;width:115px;height:1px;background:#fff"></div>
<div class="t" style="right:798px;top:207.82px;font-size:10.6px;line-height:10.6px;transform-origin:right;font-family:'Liberation Serif',serif;font-weight:bold;color:#1a1208">Cm:</div>
<div class="t" style="right:738.5px;top:207.82px;font-size:10.6px;line-height:10.6px;transform-origin:right;font-family:'Liberation Serif',serif;font-weight:bold;color:#1a1208">469.44 fF</div>
<div class="t" style="right:798px;top:221.12px;font-size:10.6px;line-height:10.6px;transform-origin:right;font-family:'Liberation Serif',serif;font-weight:bold;color:#1a1208">Rm:</div>
<div class="t" style="right:738.5px;top:221.12px;font-size:10.6px;line-height:10.6px;transform-origin:right;font-family:'Liberation Serif',serif;font-weight:bold;color:#1a1208">1.8 GΩ</div>
<div class="t" style="right:798px;top:234.42px;font-size:10.6px;line-height:10.6px;transform-origin:right;font-family:'Liberation Serif',serif;font-weight:bold;color:#1a1208">Ra:</div>
<div class="t" style="right:738.5px;top:234.42px;font-size:10.6px;line-height:10.6px;transform-origin:right;font-family:'Liberation Serif',serif;font-weight:bold;color:#1a1208">34.9 MΩ</div>
<div class="t" style="right:798px;top:248.12px;font-size:10.6px;line-height:10.6px;transform-origin:right;font-family:'Liberation Serif',serif;font-weight:bold;color:#1a1208">Tau:</div>
<div class="t" style="right:738.5px;top:248.12px;font-size:10.6px;line-height:10.6px;transform-origin:right;font-family:'Liberation Serif',serif;font-weight:bold;color:#1a1208">16.1 µs</div>
<div class="t" style="right:798px;top:262.12px;font-size:10.6px;line-height:10.6px;transform-origin:right;font-family:'Liberation Serif',serif;font-weight:bold;color:#1a1208">Hold:</div>
<div class="t" style="right:738.5px;top:259.62px;font-size:10.6px;line-height:10.6px;transform-origin:right;font-family:'Liberation Serif',serif;font-weight:bold;color:#1a1208">-0.3 pA</div>
<svg style="left:178px;top:216px" width="24" height="21"><rect x="0.5" y="0.5" width="23" height="20" fill="#e4e4e4" stroke="#d4d4d4"/><path d="M2.5 0.5 V20" stroke="#333" stroke-width="1"/><path d="M1 19.6 H23.5" stroke="#7aa4d4" stroke-width="1.6"/><path d="M4.2 1.8 L8.2 5.6 M4.2 18 L8.2 14.2" stroke="#222" stroke-width="0.8"/><path d="M3.8 1.4 L7.0 2.4 L4.8 4.6 Z" fill="#111"/><path d="M3.8 18.4 L7.0 17.4 L4.8 15.2 Z" fill="#111"/><path d="M9 17.5 H11.8 Q12.2 5 13.2 4.6 Q14.6 4.2 16.4 10 Q18.2 15.3 20.5 15.3 H23.5" stroke="#3d7ac0" stroke-width="1.2" fill="none"/></svg>
<svg style="left:178px;top:240px" width="24" height="21"><defs><linearGradient id="lb" x1="0" x2="1"><stop offset="0" stop-color="#444"/><stop offset="1" stop-color="#aaa"/></linearGradient></defs><rect x="0.5" y="0.5" width="23" height="19.5" fill="#e4e4e4" stroke="#d4d4d4"/><rect x="1.5" y="0.5" width="3.8" height="19.5" fill="url(#lb)"/><path d="M1 19 H23.5" stroke="#222" stroke-width="1.2"/><path d="M6.5 2 L10 5.5 M6.5 17 L10 13.5 M22.5 17 L19 13.5" stroke="#222" stroke-width="0.8"/><path d="M6.1 1.6 L9.3 2.6 L7.1 4.800000000000001 Z" fill="#111"/><path d="M6.1 17.4 L9.3 16.4 L7.1 14.2 Z" fill="#111"/><path d="M22.9 17.4 L19.7 16.4 L21.9 14.2 Z" fill="#111"/><path d="M11.5 12.5 H13.6 Q14 2.6 15 2.4 Q16.6 2 18.8 8 Q20.6 12.3 23.5 12.3" stroke="#3d7ac0" stroke-width="1.2" fill="none"/></svg>
<div class="a" style="left:81px;top:283px;width:115px;height:1px;background:#a8a8a8"></div>
<div class="a" style="left:81px;top:284px;width:115px;height:1px;background:#fff"></div>
<div class="t" style="left:82.7px;top:292.89px;font-size:8.4px;line-height:8.4px;transform:scaleX(0.87);transform-origin:left;">Slower</div>
<div class="t" style="left:116px;top:292.89px;font-size:8.4px;line-height:8.4px;transform:scaleX(0.87);transform-origin:left;">Faster</div>
<svg style="left:0;top:306px" width="200" height="3"><rect x="86.00" y="0" width="0.8" height="1.6" fill="#b8b8b8"/><rect x="89.05" y="0" width="0.8" height="1.6" fill="#b8b8b8"/><rect x="92.10" y="0" width="0.8" height="1.6" fill="#b8b8b8"/><rect x="95.15" y="0" width="0.8" height="1.6" fill="#b8b8b8"/><rect x="98.20" y="0" width="0.8" height="1.6" fill="#b8b8b8"/><rect x="101.25" y="0" width="0.8" height="1.6" fill="#b8b8b8"/><rect x="104.30" y="0" width="0.8" height="1.6" fill="#b8b8b8"/><rect x="107.35" y="0" width="0.8" height="1.6" fill="#b8b8b8"/><rect x="110.40" y="0" width="0.8" height="1.6" fill="#b8b8b8"/><rect x="113.45" y="0" width="0.8" height="1.6" fill="#b8b8b8"/><rect x="116.50" y="0" width="0.8" height="1.6" fill="#b8b8b8"/><rect x="119.55" y="0" width="0.8" height="1.6" fill="#b8b8b8"/><rect x="122.60" y="0" width="0.8" height="1.6" fill="#b8b8b8"/><rect x="125.65" y="0" width="0.8" height="1.6" fill="#b8b8b8"/><rect x="128.70" y="0" width="0.8" height="1.6" fill="#b8b8b8"/></svg>
<div class="a" style="left:83px;top:314px;width:45px;height:3px;background:#e7eae8;border:1px solid #d6d6d6"></div>
<svg style="left:127px;top:308px" width="9" height="15"><path d="M0 3.5 L4 0 L8 3.5 V14 H0 Z" fill="#0078d7"/></svg>
<div class="t" style="left:94px;top:325.89px;font-size:8.4px;line-height:8.4px;transform:scaleX(0.87);transform-origin:left;">133.3 Hz</div>
<div class="t" style="left:147px;top:292.69px;font-size:8.4px;line-height:8.4px;transform:scaleX(0.87);transform-origin:left;">Pulse (mV):</div>
<div class="a" style="left:151px;top:303.3px;width:33px;height:13.5px;background:#fff;border:1px solid #858585;border-right-color:#a8a8a8;border-bottom-color:#a8a8a8"></div>
<div class="t" style="left:153px;top:305.56px;font-size:9.2px;line-height:9.2px;transform:scaleX(0.82);transform-origin:left;color:#222">10</div>
<div class="a" style="left:186px;top:304px;width:7.5px;height:12.5px;background:#e6e6e6;border:1px solid #d6d6d6"></div>
<svg style="left:0;top:0" width="900" height="720"><path d="M187.75 308.25 L191.75 308.25 L189.75 306.05 Z M187.75 312.25 L191.75 312.25 L189.75 314.45 Z" fill="#000"/><line x1="187" y1="310.25" x2="192.5" y2="310.25" stroke="#c8c8c8" stroke-width="0.8"/></svg>
<div class="t" style="left:147px;top:320.89px;font-size:8.4px;line-height:8.4px;transform:scaleX(0.87);transform-origin:left;">Holding (mV):</div>
<div class="a" style="left:151px;top:332.5px;width:33px;height:14px;background:#fff;border:1px solid #858585;border-right-color:#a8a8a8;border-bottom-color:#a8a8a8"></div>
<div class="t" style="left:153px;top:335.01px;font-size:9.2px;line-height:9.2px;transform:scaleX(0.82);transform-origin:left;color:#222">0</div>
<div class="a" style="left:186px;top:333px;width:7.5px;height:12.5px;background:#e6e6e6;border:1px solid #d6d6d6"></div>
<svg style="left:0;top:0" width="900" height="720"><path d="M187.75 337.25 L191.75 337.25 L189.75 335.05 Z M187.75 341.25 L191.75 341.25 L189.75 343.45 Z" fill="#000"/><line x1="187" y1="339.25" x2="192.5" y2="339.25" stroke="#c8c8c8" stroke-width="0.8"/></svg>
<div class="a" style="left:81px;top:353px;width:115px;height:1px;background:#a8a8a8"></div>
<div class="a" style="left:81px;top:354px;width:115px;height:1px;background:#fff"></div>
<div class="t" style="left:78px;top:361.89px;font-size:8.4px;line-height:8.4px;transform:scaleX(0.87);transform-origin:left;">OUTPUT:</div>
<div class="t" style="left:78px;top:371.02px;font-size:8.6px;line-height:8.6px;transform:scaleX(0.94);transform-origin:left;font-weight:bold;color:#2a1e10">Cmd 0 (mV)</div>
<div class="t" style="left:78px;top:383.89px;font-size:8.4px;line-height:8.4px;transform:scaleX(0.87);transform-origin:left;">INPUT:</div>
<div class="t" style="left:78px;top:395.02px;font-size:8.6px;line-height:8.6px;transform:scaleX(0.94);transform-origin:left;font-weight:bold;color:#2a1e10">I_MTest 0 (pA)</div>
<div class="a" style="left:147px;top:366px;width:9.3px;height:9.3px;background:#fff;border:1px solid #4a4a4a"></div>
<svg style="left:147px;top:366px" width="9.3" height="9.3"><path d="M1.6 4.4 L3.6 6.8 L7.6 1.8" stroke="#333" stroke-width="1.15" fill="none"/></svg>
<div class="t" style="left:158.5px;top:366.39px;font-size:8.4px;line-height:8.4px;transform:scaleX(0.87);transform-origin:left;">Averaging</div>
<div class="a" style="left:151px;top:378.5px;width:33px;height:13.5px;background:#fff;border:1px solid #858585;border-right-color:#a8a8a8;border-bottom-color:#a8a8a8"></div>
<div class="t" style="left:153px;top:380.76px;font-size:9.2px;line-height:9.2px;transform:scaleX(0.82);transform-origin:left;color:#222">10</div>
<div class="a" style="left:186px;top:379px;width:7.5px;height:12.5px;background:#e6e6e6;border:1px solid #d6d6d6"></div>
<svg style="left:0;top:0" width="900" height="720"><path d="M187.75 383.25 L191.75 383.25 L189.75 381.05 Z M187.75 387.25 L191.75 387.25 L189.75 389.45 Z" fill="#000"/><line x1="187" y1="385.25" x2="192.5" y2="385.25" stroke="#c8c8c8" stroke-width="0.8"/></svg>
<div class="a" style="left:81px;top:409px;width:115px;height:1px;background:#a8a8a8"></div>
<div class="a" style="left:81px;top:410px;width:115px;height:1px;background:#fff"></div>
<div class="a" style="left:80px;top:419.3px;width:55px;height:14.5px;background:#e1e1e1;border:1px solid #adadad"></div>
<div class="t" style="left:7.5px;width:200px;text-align:center;top:422.34px;font-size:8.4px;line-height:8.4px;transform:scaleX(0.87);color:#222">Relative Cm</div>
<div class="a" style="left:80px;top:436.3px;width:55px;height:14.5px;background:#e1e1e1;border:1px solid #adadad"></div>
<div class="t" style="left:7.5px;width:200px;text-align:center;top:439.34px;font-size:8.4px;line-height:8.4px;transform:scaleX(0.87);color:#222">=&gt; Lab Book</div>
<div class="a" style="left:143px;top:420px;width:54px;height:32px;border:1px solid #dadada"></div>
<div class="a" style="left:147px;top:415.5px;width:9.3px;height:9.3px;background:#fff;border:1px solid #4a4a4a"></div>
<div class="t" style="left:158.5px;top:416.39px;font-size:8.4px;line-height:8.4px;transform:scaleX(0.87);transform-origin:left;">Tracking</div>
<div class="a" style="left:153.5px;top:428.5px;width:9.5px;height:9.5px;border-radius:50%;background:#f4f4f4;border:1px solid #d0d0d0"></div>
<div class="t" style="left:165px;top:428.39px;font-size:8.4px;line-height:8.4px;transform:scaleX(0.87);transform-origin:left;color:#a6a6a6">Fast</div>
<div class="a" style="left:153.5px;top:441px;width:9.5px;height:9.5px;border-radius:50%;background:#f4f4f4;border:1px solid #d0d0d0"></div>
<div class="t" style="left:165px;top:440.89px;font-size:8.4px;line-height:8.4px;transform:scaleX(0.87);transform-origin:left;color:#a6a6a6">Slow</div>
<div class="a" style="left:156px;top:443.5px;width:4.5px;height:4.5px;border-radius:50%;background:#c8c8c8"></div>
<div class="a" style="left:205px;top:81px;width:20px;height:535px;background:#a0a0a0"></div>
<div class="a" style="left:204px;top:81px;width:1.3px;height:561px;background:#858585"></div>
<div class="a" style="left:205px;top:81px;width:20px;height:1px;background:#8a8a8a"></div>
<div class="a" style="left:225px;top:81px;width:660px;height:1px;background:#fff"></div>
<div class="t" style="left:210.5px;top:348.5px;font-size:7.6px;line-height:7.6px;transform:translate(-50%,-50%) rotate(-90deg);color:#2a2218">I_MTest 0</div>
<div class="t" style="left:220.5px;top:348.5px;font-size:7.6px;line-height:7.6px;transform:translate(-50%,-50%) rotate(-90deg);color:#2a2218">(pA)</div>
<div class="a" style="left:205px;top:617px;width:680px;height:14px;background:#f0f0f0"></div>
<div class="a" style="left:225px;top:81px;width:23px;height:535px;background:#f0f0f0"></div>
<div class="a" style="left:248px;top:81px;width:637px;height:535px;background:#fff"></div>
<svg style="left:0;top:0" width="900" height="720"><line x1="248" y1="604.79" x2="885" y2="604.79" stroke="#d9d9d9" stroke-width="1.2"/><line x1="248" y1="594.13" x2="885" y2="594.13" stroke="#d9d9d9" stroke-width="1.2"/><line x1="248" y1="583.47" x2="885" y2="583.47" stroke="#d9d9d9" stroke-width="1.2"/><line x1="248" y1="572.81" x2="885" y2="572.81" stroke="#d9d9d9" stroke-width="1.2"/><line x1="248" y1="562.15" x2="885" y2="562.15" stroke="#d9d9d9" stroke-width="1.2"/><line x1="248" y1="551.49" x2="885" y2="551.49" stroke="#d9d9d9" stroke-width="1.2"/><line x1="248" y1="540.83" x2="885" y2="540.83" stroke="#d9d9d9" stroke-width="1.2"/><line x1="248" y1="530.17" x2="885" y2="530.17" stroke="#d9d9d9" stroke-width="1.2"/><line x1="248" y1="519.51" x2="885" y2="519.51" stroke="#d9d9d9" stroke-width="1.2"/><line x1="248" y1="508.85" x2="885" y2="508.85" stroke="#d9d9d9" stroke-width="1.2"/><line x1="248" y1="498.19" x2="885" y2="498.19" stroke="#d9d9d9" stroke-width="1.2"/><line x1="248" y1="487.53" x2="885" y2="487.53" stroke="#d9d9d9" stroke-width="1.2"/><line x1="248" y1="476.87" x2="885" y2="476.87" stroke="#d9d9d9" stroke-width="1.2"/><line x1="248" y1="466.21" x2="885" y2="466.21" stroke="#d9d9d9" stroke-width="1.2"/><line x1="248" y1="455.55" x2="885" y2="455.55" stroke="#d9d9d9" stroke-width="1.2"/><line x1="248" y1="444.89" x2="885" y2="444.89" stroke="#d9d9d9" stroke-width="1.2"/><line x1="248" y1="434.23" x2="885" y2="434.23" stroke="#d9d9d9" stroke-width="1.2"/><line x1="248" y1="423.57" x2="885" y2="423.57" stroke="#d9d9d9" stroke-width="1.2"/><line x1="248" y1="412.91" x2="885" y2="412.91" stroke="#d9d9d9" stroke-width="1.2"/><line x1="248" y1="402.25" x2="885" y2="402.25" stroke="#d9d9d9" stroke-width="1.2"/><line x1="248" y1="391.59" x2="885" y2="391.59" stroke="#d9d9d9" stroke-width="1.2"/><line x1="248" y1="380.93" x2="885" y2="380.93" stroke="#d9d9d9" stroke-width="1.2"/><line x1="248" y1="370.27" x2="885" y2="370.27" stroke="#d9d9d9" stroke-width="1.2"/><line x1="248" y1="359.61" x2="885" y2="359.61" stroke="#d9d9d9" stroke-width="1.2"/><line x1="248" y1="348.95" x2="885" y2="348.95" stroke="#d9d9d9" stroke-width="1.2"/><line x1="248" y1="338.29" x2="885" y2="338.29" stroke="#d9d9d9" stroke-width="1.2"/><line x1="248" y1="327.63" x2="885" y2="327.63" stroke="#d9d9d9" stroke-width="1.2"/><line x1="248" y1="316.97" x2="885" y2="316.97" stroke="#d9d9d9" stroke-width="1.2"/><line x1="248" y1="306.31" x2="885" y2="306.31" stroke="#d9d9d9" stroke-width="1.2"/><line x1="248" y1="295.65" x2="885" y2="295.65" stroke="#d9d9d9" stroke-width="1.2"/><line x1="248" y1="284.99" x2="885" y2="284.99" stroke="#d9d9d9" stroke-width="1.2"/><line x1="248" y1="274.33" x2="885" y2="274.33" stroke="#d9d9d9" stroke-width="1.2"/><line x1="248" y1="263.67" x2="885" y2="263.67" stroke="#d9d9d9" stroke-width="1.2"/><line x1="248" y1="253.01" x2="885" y2="253.01" stroke="#d9d9d9" stroke-width="1.2"/><line x1="248" y1="242.35" x2="885" y2="242.35" stroke="#d9d9d9" stroke-width="1.2"/><line x1="248" y1="231.69" x2="885" y2="231.69" stroke="#d9d9d9" stroke-width="1.2"/><line x1="248" y1="221.03" x2="885" y2="221.03" stroke="#d9d9d9" stroke-width="1.2"/><line x1="248" y1="210.37" x2="885" y2="210.37" stroke="#d9d9d9" stroke-width="1.2"/><line x1="248" y1="199.71" x2="885" y2="199.71" stroke="#d9d9d9" stroke-width="1.2"/><line x1="248" y1="189.05" x2="885" y2="189.05" stroke="#d9d9d9" stroke-width="1.2"/><line x1="248" y1="178.39" x2="885" y2="178.39" stroke="#d9d9d9" stroke-width="1.2"/><line x1="248" y1="167.73" x2="885" y2="167.73" stroke="#d9d9d9" stroke-width="1.2"/><line x1="248" y1="157.07" x2="885" y2="157.07" stroke="#d9d9d9" stroke-width="1.2"/><line x1="248" y1="146.41" x2="885" y2="146.41" stroke="#d9d9d9" stroke-width="1.2"/><line x1="248" y1="135.75" x2="885" y2="135.75" stroke="#d9d9d9" stroke-width="1.2"/><line x1="248" y1="125.09" x2="885" y2="125.09" stroke="#d9d9d9" stroke-width="1.2"/><line x1="248" y1="114.43" x2="885" y2="114.43" stroke="#d9d9d9" stroke-width="1.2"/><line x1="248" y1="103.77" x2="885" y2="103.77" stroke="#d9d9d9" stroke-width="1.2"/><line x1="248" y1="93.11" x2="885" y2="93.11" stroke="#d9d9d9" stroke-width="1.2"/><line x1="290.08" y1="81" x2="290.08" y2="616" stroke="#d3d3d3" stroke-width="1.2"/><line x1="332.66" y1="81" x2="332.66" y2="616" stroke="#d3d3d3" stroke-width="1.2"/><line x1="375.24" y1="81" x2="375.24" y2="616" stroke="#d3d3d3" stroke-width="1.2"/><line x1="417.82" y1="81" x2="417.82" y2="616" stroke="#d3d3d3" stroke-width="1.2"/><line x1="460.40" y1="81" x2="460.40" y2="616" stroke="#d3d3d3" stroke-width="1.2"/><line x1="502.98" y1="81" x2="502.98" y2="616" stroke="#d3d3d3" stroke-width="1.2"/><line x1="545.56" y1="81" x2="545.56" y2="616" stroke="#d3d3d3" stroke-width="1.2"/><line x1="588.14" y1="81" x2="588.14" y2="616" stroke="#d3d3d3" stroke-width="1.2"/><line x1="630.72" y1="81" x2="630.72" y2="616" stroke="#d3d3d3" stroke-width="1.2"/><line x1="673.30" y1="81" x2="673.30" y2="616" stroke="#d3d3d3" stroke-width="1.2"/><line x1="715.88" y1="81" x2="715.88" y2="616" stroke="#d3d3d3" stroke-width="1.2"/><line x1="758.46" y1="81" x2="758.46" y2="616" stroke="#d3d3d3" stroke-width="1.2"/><line x1="801.04" y1="81" x2="801.04" y2="616" stroke="#d3d3d3" stroke-width="1.2"/><line x1="843.62" y1="81" x2="843.62" y2="616" stroke="#d3d3d3" stroke-width="1.2"/><line x1="247.5" y1="81" x2="247.5" y2="617" stroke="#3a3a3a" stroke-width="1.3"/><line x1="205" y1="616.3" x2="885" y2="616.3" stroke="#3a3a3a" stroke-width="1.3"/><line x1="243.50" y1="604.79" x2="247.5" y2="604.79" stroke="#3a3a3a" stroke-width="1"/><line x1="245.50" y1="594.13" x2="247.5" y2="594.13" stroke="#3a3a3a" stroke-width="1"/><line x1="245.50" y1="583.47" x2="247.5" y2="583.47" stroke="#3a3a3a" stroke-width="1"/><line x1="245.50" y1="572.81" x2="247.5" y2="572.81" stroke="#3a3a3a" stroke-width="1"/><line x1="243.50" y1="562.15" x2="247.5" y2="562.15" stroke="#3a3a3a" stroke-width="1"/><line x1="245.50" y1="551.49" x2="247.5" y2="551.49" stroke="#3a3a3a" stroke-width="1"/><line x1="245.50" y1="540.83" x2="247.5" y2="540.83" stroke="#3a3a3a" stroke-width="1"/><line x1="245.50" y1="530.17" x2="247.5" y2="530.17" stroke="#3a3a3a" stroke-width="1"/><line x1="243.50" y1="519.51" x2="247.5" y2="519.51" stroke="#3a3a3a" stroke-width="1"/><line x1="245.50" y1="508.85" x2="247.5" y2="508.85" stroke="#3a3a3a" stroke-width="1"/><line x1="245.50" y1="498.19" x2="247.5" y2="498.19" stroke="#3a3a3a" stroke-width="1"/><line x1="245.50" y1="487.53" x2="247.5" y2="487.53" stroke="#3a3a3a" stroke-width="1"/><line x1="243.50" y1="476.87" x2="247.5" y2="476.87" stroke="#3a3a3a" stroke-width="1"/><line x1="245.50" y1="466.21" x2="247.5" y2="466.21" stroke="#3a3a3a" stroke-width="1"/><line x1="245.50" y1="455.55" x2="247.5" y2="455.55" stroke="#3a3a3a" stroke-width="1"/><line x1="245.50" y1="444.89" x2="247.5" y2="444.89" stroke="#3a3a3a" stroke-width="1"/><line x1="243.50" y1="434.23" x2="247.5" y2="434.23" stroke="#3a3a3a" stroke-width="1"/><line x1="245.50" y1="423.57" x2="247.5" y2="423.57" stroke="#3a3a3a" stroke-width="1"/><line x1="245.50" y1="412.91" x2="247.5" y2="412.91" stroke="#3a3a3a" stroke-width="1"/><line x1="245.50" y1="402.25" x2="247.5" y2="402.25" stroke="#3a3a3a" stroke-width="1"/><line x1="243.50" y1="391.59" x2="247.5" y2="391.59" stroke="#3a3a3a" stroke-width="1"/><line x1="245.50" y1="380.93" x2="247.5" y2="380.93" stroke="#3a3a3a" stroke-width="1"/><line x1="245.50" y1="370.27" x2="247.5" y2="370.27" stroke="#3a3a3a" stroke-width="1"/><line x1="245.50" y1="359.61" x2="247.5" y2="359.61" stroke="#3a3a3a" stroke-width="1"/><line x1="243.50" y1="348.95" x2="247.5" y2="348.95" stroke="#3a3a3a" stroke-width="1"/><line x1="245.50" y1="338.29" x2="247.5" y2="338.29" stroke="#3a3a3a" stroke-width="1"/><line x1="245.50" y1="327.63" x2="247.5" y2="327.63" stroke="#3a3a3a" stroke-width="1"/><line x1="245.50" y1="316.97" x2="247.5" y2="316.97" stroke="#3a3a3a" stroke-width="1"/><line x1="243.50" y1="306.31" x2="247.5" y2="306.31" stroke="#3a3a3a" stroke-width="1"/><line x1="245.50" y1="295.65" x2="247.5" y2="295.65" stroke="#3a3a3a" stroke-width="1"/><line x1="245.50" y1="284.99" x2="247.5" y2="284.99" stroke="#3a3a3a" stroke-width="1"/><line x1="245.50" y1="274.33" x2="247.5" y2="274.33" stroke="#3a3a3a" stroke-width="1"/><line x1="243.50" y1="263.67" x2="247.5" y2="263.67" stroke="#3a3a3a" stroke-width="1"/><line x1="245.50" y1="253.01" x2="247.5" y2="253.01" stroke="#3a3a3a" stroke-width="1"/><line x1="245.50" y1="242.35" x2="247.5" y2="242.35" stroke="#3a3a3a" stroke-width="1"/><line x1="245.50" y1="231.69" x2="247.5" y2="231.69" stroke="#3a3a3a" stroke-width="1"/><line x1="243.50" y1="221.03" x2="247.5" y2="221.03" stroke="#3a3a3a" stroke-width="1"/><line x1="245.50" y1="210.37" x2="247.5" y2="210.37" stroke="#3a3a3a" stroke-width="1"/><line x1="245.50" y1="199.71" x2="247.5" y2="199.71" stroke="#3a3a3a" stroke-width="1"/><line x1="245.50" y1="189.05" x2="247.5" y2="189.05" stroke="#3a3a3a" stroke-width="1"/><line x1="243.50" y1="178.39" x2="247.5" y2="178.39" stroke="#3a3a3a" stroke-width="1"/><line x1="245.50" y1="167.73" x2="247.5" y2="167.73" stroke="#3a3a3a" stroke-width="1"/><line x1="245.50" y1="157.07" x2="247.5" y2="157.07" stroke="#3a3a3a" stroke-width="1"/><line x1="245.50" y1="146.41" x2="247.5" y2="146.41" stroke="#3a3a3a" stroke-width="1"/><line x1="243.50" y1="135.75" x2="247.5" y2="135.75" stroke="#3a3a3a" stroke-width="1"/><line x1="245.50" y1="125.09" x2="247.5" y2="125.09" stroke="#3a3a3a" stroke-width="1"/><line x1="245.50" y1="114.43" x2="247.5" y2="114.43" stroke="#3a3a3a" stroke-width="1"/><line x1="245.50" y1="103.77" x2="247.5" y2="103.77" stroke="#3a3a3a" stroke-width="1"/><line x1="243.50" y1="93.11" x2="247.5" y2="93.11" stroke="#3a3a3a" stroke-width="1"/><line x1="247.50" y1="616" x2="247.50" y2="619" stroke="#3a3a3a" stroke-width="1"/><line x1="290.08" y1="616" x2="290.08" y2="618" stroke="#3a3a3a" stroke-width="1"/><line x1="332.66" y1="616" x2="332.66" y2="618" stroke="#3a3a3a" stroke-width="1"/><line x1="375.24" y1="616" x2="375.24" y2="618" stroke="#3a3a3a" stroke-width="1"/><line x1="417.82" y1="616" x2="417.82" y2="618" stroke="#3a3a3a" stroke-width="1"/><line x1="460.40" y1="616" x2="460.40" y2="619" stroke="#3a3a3a" stroke-width="1"/><line x1="502.98" y1="616" x2="502.98" y2="618" stroke="#3a3a3a" stroke-width="1"/><line x1="545.56" y1="616" x2="545.56" y2="618" stroke="#3a3a3a" stroke-width="1"/><line x1="588.14" y1="616" x2="588.14" y2="618" stroke="#3a3a3a" stroke-width="1"/><line x1="630.72" y1="616" x2="630.72" y2="618" stroke="#3a3a3a" stroke-width="1"/><line x1="673.30" y1="616" x2="673.30" y2="619" stroke="#3a3a3a" stroke-width="1"/><line x1="715.88" y1="616" x2="715.88" y2="618" stroke="#3a3a3a" stroke-width="1"/><line x1="758.46" y1="616" x2="758.46" y2="618" stroke="#3a3a3a" stroke-width="1"/><line x1="801.04" y1="616" x2="801.04" y2="618" stroke="#3a3a3a" stroke-width="1"/><line x1="843.62" y1="616" x2="843.62" y2="618" stroke="#3a3a3a" stroke-width="1"/></svg>
<div class="t" style="right:656.5px;top:600.54px;font-size:8.8px;line-height:8.8px;transform:scaleX(0.82);transform-origin:right;color:#2a2a2a">-120</div>
<div class="t" style="right:656.5px;top:557.90px;font-size:8.8px;line-height:8.8px;transform:scaleX(0.82);transform-origin:right;color:#2a2a2a">-100</div>
<div class="t" style="right:656.5px;top:515.26px;font-size:8.8px;line-height:8.8px;transform:scaleX(0.82);transform-origin:right;color:#2a2a2a">-80</div>
<div class="t" style="right:656.5px;top:472.62px;font-size:8.8px;line-height:8.8px;transform:scaleX(0.82);transform-origin:right;color:#2a2a2a">-60</div>
<div class="t" style="right:656.5px;top:429.98px;font-size:8.8px;line-height:8.8px;transform:scaleX(0.82);transform-origin:right;color:#2a2a2a">-40</div>
<div class="t" style="right:656.5px;top:387.34px;font-size:8.8px;line-height:8.8px;transform:scaleX(0.82);transform-origin:right;color:#2a2a2a">-20</div>
<div class="t" style="right:656.5px;top:344.70px;font-size:8.8px;line-height:8.8px;transform:scaleX(0.82);transform-origin:right;color:#2a2a2a">0</div>
<div class="t" style="right:656.5px;top:302.06px;font-size:8.8px;line-height:8.8px;transform:scaleX(0.82);transform-origin:right;color:#2a2a2a">20</div>
<div class="t" style="right:656.5px;top:259.42px;font-size:8.8px;line-height:8.8px;transform:scaleX(0.82);transform-origin:right;color:#2a2a2a">40</div>
<div class="t" style="right:656.5px;top:216.78px;font-size:8.8px;line-height:8.8px;transform:scaleX(0.82);transform-origin:right;color:#2a2a2a">60</div>
<div class="t" style="right:656.5px;top:174.14px;font-size:8.8px;line-height:8.8px;transform:scaleX(0.82);transform-origin:right;color:#2a2a2a">80</div>
<div class="t" style="right:656.5px;top:131.50px;font-size:8.8px;line-height:8.8px;transform:scaleX(0.82);transform-origin:right;color:#2a2a2a">100</div>
<div class="t" style="right:656.5px;top:88.86px;font-size:8.8px;line-height:8.8px;transform:scaleX(0.82);transform-origin:right;color:#2a2a2a">120</div>
<div class="t" style="left:149.5px;width:200px;text-align:center;top:620.05px;font-size:8.8px;line-height:8.8px;transform:scaleX(0.82);color:#2a2a2a">0</div>
<div class="t" style="left:254px;width:200px;text-align:center;top:620.05px;font-size:8.8px;line-height:8.8px;transform:scaleX(0.82);color:#2a2a2a">(ms)</div>
<div class="t" style="left:359.5px;width:200px;text-align:center;top:620.05px;font-size:8.8px;line-height:8.8px;transform:scaleX(0.82);color:#2a2a2a">0.5</div>
<div class="t" style="left:572px;width:200px;text-align:center;top:620.05px;font-size:8.8px;line-height:8.8px;transform:scaleX(0.82);color:#2a2a2a">1</div>
<svg style="left:0;top:0" width="900" height="720"><line x1="525.5" y1="337.9" x2="565.2" y2="337.9" stroke="#ff6060" stroke-width="1.3"/><line x1="844.4" y1="349" x2="884.4" y2="349" stroke="#ff6060" stroke-width="1.3"/><path d="M247.3 347.7 L251.0 346.5 L254.5 345.4 L258.0 346.8 L260.0 347.3 L261.5 335.0 L264.0 327.0 L266.0 316.0 L267.8 290.0 L268.5 270.0 L268.8 250.0 L271.0 200.0 L272.5 172.0 L274.0 155.3 L275.6 147.3 L277.3 155.0 L278.5 172.0 L280.8 195.0 L284.3 245.0 L286.0 270.0 L289.5 298.0 L290.0 307.0 L292.0 315.0 L295.0 320.0 L300.8 323.3 L304.0 325.0 L310.0 327.5 L313.0 328.0 L318.0 326.5 L324.0 327.7 L330.0 327.3 L332.9 327.3 L339.4 324.2 L343.7 325.2 L346.6 328.0 L358.9 328.3 L363.2 327.6 L367.6 328.5 L373.0 332.4 L376.2 330.5 L379.8 330.2 L384.2 331.7 L391.4 335.7 L399.3 331.4 L404.4 331.4 L410.2 337.2 L417.4 332.4 L425.3 335.6 L431.1 334.8 L439.8 335.6 L445.6 334.3 L452.8 335.3 L458.0 332.0 L462.5 332.3 L469.2 337.7 L476.0 337.7 L481.2 336.2 L489.5 335.5 L497.0 338.0 L506.7 334.5 L515.0 338.3 L525.5 337.7 L531.5 339.2 L539.0 338.0 L547.2 335.5 L555.5 338.0 L565.2 339.2 L570.5 338.5 L577.6 339.2 L580.0 345.3 L581.5 352.2 L584.5 362.0 L586.0 372.8 L586.8 391.0 L588.0 414.0 L588.6 440.0 L589.7 466.7 L591.0 493.9 L592.6 514.7 L594.5 533.8 L596.6 522.7 L599.0 498.7 L599.8 490.7 L601.4 462.0 L603.0 442.8 L604.2 430.0 L605.1 415.6 L608.2 391.0 L611.3 380.4 L615.8 365.1 L618.9 359.0 L623.5 354.4 L627.3 354.4 L631.1 358.3 L637.2 360.3 L643.3 357.5 L647.2 356.4 L655.9 356.4 L658.8 355.5 L663.1 357.4 L668.9 360.7 L673.2 358.8 L677.6 358.1 L686.2 354.2 L689.8 354.2 L694.2 356.4 L702.1 356.7 L707.9 355.2 L712.2 353.5 L715.8 351.6 L720.9 351.2 L726.7 350.2 L732.4 351.6 L736.8 351.2 L741.1 349.4 L744.0 349.9 L748.3 352.3 L754.1 352.0 L758.4 351.2 L761.3 351.2 L764.2 352.6 L769.3 348.7 L773.3 347.8 L782.2 348.9 L790.0 351.8 L800.0 348.4 L808.9 350.7 L818.9 346.7 L824.4 347.8 L833.3 351.1 L838.9 348.4 L844.4 348.4 L850.0 350.5 L856.7 351.8 L866.7 348.4 L875.6 350.0 L881.1 346.7 L884.4 346.7" stroke="#4040ff" stroke-width="1.05" fill="none" stroke-linejoin="round"/><path d="M280.6 195 L284.3 245 L286 270 L289.5 298" stroke="#ff4646" stroke-width="1.3" fill="none" stroke-dasharray="5 1.2"/><path d="M599.8 490.7 L601.4 462 L603 442.8 L604.2 430 L605.1 415.6 L608.2 391" stroke="#ff4646" stroke-width="1.3" fill="none" stroke-dasharray="5 1.2"/></svg>
<div class="a" style="left:885px;top:81px;width:12px;height:535px;background:#f0f0f0"></div>
<div class="a" style="left:897px;top:81px;width:3px;height:597px;background:#f0f0f0"></div>
<div class="a" style="left:886px;top:333.3px;width:10px;height:31px;background:#cdcdcd"></div>
<svg style="left:886px;top:84px" width="10" height="8"><path d="M2 5 L5 2 L8 5" stroke="#505050" stroke-width="1.4" fill="none"/></svg>
<svg style="left:886px;top:607px" width="10" height="8"><path d="M2 2.5 L5 5.5 L8 2.5" stroke="#505050" stroke-width="1.4" fill="none"/></svg>
<svg style="left:886px;top:616px" width="13" height="13"><path d="M8.6 2.6 A4.6 4.6 0 1 1 6.2 1.9" fill="#fff" stroke="#222" stroke-width="1.1"/><path d="M6.4 6.6 L8 2" stroke="#222" stroke-width="1.1"/></svg>
<div class="a" style="left:206px;top:617.5px;width:8.5px;height:8.5px;background:#e6e6e6;border:1px solid #f8f8f8;border-right-color:#cfcfcf;border-bottom-color:#cfcfcf"></div>
<div class="a" style="left:215px;top:617.5px;width:8.5px;height:8.5px;background:#e6e6e6;border:1px solid #f8f8f8;border-right-color:#cfcfcf;border-bottom-color:#cfcfcf"></div>
<svg style="left:206px;top:617.5px" width="18" height="9"><path d="M5.4 2.2 L3.2 4.3 L5.4 6.4 Z M12.6 2.2 L14.8 4.3 L12.6 6.4 Z" fill="#111"/></svg>
<div class="a" style="left:248px;top:630px;width:638px;height:1px;background:#fafafa"></div>
<div class="a" style="left:248px;top:631px;width:638px;height:11px;background:#f0f0f0"></div>
<svg style="left:250px;top:632px" width="8" height="9"><path d="M5 1.5 L2.5 4.5 L5 7.5" stroke="#b8b8b8" stroke-width="1.2" fill="none"/></svg>
<svg style="left:876px;top:632px" width="8" height="9"><path d="M3 1.5 L5.5 4.5 L3 7.5" stroke="#b0b0b0" stroke-width="1.2" fill="none"/></svg>
<div class="a" style="left:885px;top:81px;width:1px;height:535px;background:#fff"></div>
<div class="a" style="left:897px;top:81px;width:1px;height:561px;background:#fbfbfb"></div>
<div class="a" style="left:206px;top:642px;width:691px;height:1px;background:#fafafa"></div>
<div class="a" style="left:226px;top:339.5px;width:7.5px;height:18px;background:#f4f4f4;border:1px solid #d8d8d8"></div>
<svg style="left:226px;top:339.5px" width="8" height="18"><path d="M1.8 6.2 L5.7 6.2 L3.75 4 Z M1.8 11.8 L5.7 11.8 L3.75 14 Z" fill="#111"/><path d="M0.5 9 H7" stroke="#d0d0d0" stroke-width="1"/></svg>
<div class="a" style="left:0px;top:678px;width:900px;height:14px;background:#f0f0f0"></div>
<div class="a" style="left:0px;top:678px;width:900px;height:1px;background:#fafafa"></div>
<div class="t" style="left:2px;top:681.19px;font-size:8.4px;line-height:8.4px;transform:scaleX(0.93);transform-origin:left;color:#1a1a1a">For Help, press F1</div>
<div class="t" style="left:517px;top:681.89px;font-size:8.4px;line-height:8.4px;transform:scaleX(0.93);transform-origin:left;color:#1a1a1a">Disk = 5360 Sw</div>
<div class="a" style="left:603px;top:680px;width:1px;height:12px;background:#dcdcdc"></div>
<div class="t" style="left:607px;top:681.89px;font-size:8.4px;line-height:8.4px;transform:scaleX(0.93);transform-origin:left;color:#1a1a1a">BreakIn.pro</div>
<div class="a" style="left:828px;top:680px;width:1px;height:12px;background:#dcdcdc"></div>
<div class="t" style="left:830.5px;top:681.89px;font-size:8.4px;line-height:8.4px;transform:scaleX(0.93);transform-origin:left;color:#1a1a1a">16:33:55 (02:23:37)</div>
<div class="a" style="left:0px;top:692px;width:900px;height:28px;background:#243341"></div>
<div class="a" style="left:0px;top:692px;width:900px;height:1px;background:#1a2530"></div>
<svg style="left:11px;top:700px" width="13" height="13"><path d="M0 1.6 L5.3 0.9 V6 H0 Z M6.2 0.8 L12.5 0 V6 H6.2 Z M0 6.9 H5.3 V12 L0 11.3 Z M6.2 6.9 H12.5 V12.8 L6.2 12 Z" fill="#fff"/></svg>
<svg style="left:45px;top:700px" width="13" height="13"><circle cx="7.5" cy="5" r="3.8" fill="none" stroke="#fff" stroke-width="1.1"/><path d="M4.8 7.8 L0.8 12" stroke="#fff" stroke-width="1.2"/></svg>
<svg style="left:78px;top:700px" width="13" height="12"><rect x="1.5" y="2.5" width="6" height="6" fill="none" stroke="#fff" stroke-width="1"/><path d="M0 0.5 H9 M0 10.5 H9" stroke="#fff" stroke-width="1"/><rect x="10" y="0" width="1.6" height="1.6" fill="#fff"/><rect x="10" y="3" width="1.6" height="8" fill="#fff"/></svg>
<svg style="left:112px;top:699px" width="17" height="14"><path d="M0 1 H6 L7.5 2.5 H16 V13 H0 Z" fill="#f3c443"/><path d="M0 4 H16 V13 H0 Z" fill="#ffd865"/><rect x="5" y="8" width="6" height="5" fill="#2f8ad8"/><rect x="6.5" y="9" width="3" height="4" fill="#ffd865"/></svg>
<svg style="left:146px;top:697px" width="18" height="17"><path d="M4 9.5 H13.5 Q13.5 4.5 9 4.5 Q4 4.5 4 9.5 Q4 14 9 14 Q12 14 13.2 12" fill="none" stroke="#4cb6ef" stroke-width="2.3"/><path d="M5 9 H12.5" stroke="#4cb6ef" stroke-width="1.5"/><path d="M2 15 Q0 12 5 7 Q12 1 16 1.5 Q18 3 14.5 6" fill="none" stroke="#f6c418" stroke-width="1.2"/></svg>
<svg style="left:181px;top:698px" width="17" height="17"><circle cx="8.5" cy="8.5" r="8" fill="#db4437"/><path d="M8.5 8.5 L1.6 12.5 A8 8 0 0 0 10 16.4 Z" fill="#0f9d58"/><path d="M8.5 8.5 L10 16.4 A8 8 0 0 0 15.4 4.5 L8.5 4.5 Z" fill="#ffcd40"/><circle cx="8.5" cy="8.5" r="3.8" fill="#fff"/><circle cx="8.5" cy="8.5" r="3" fill="#4285f4"/></svg>
<div class="a" style="left:207px;top:692px;width:33px;height:28px;background:#4b555f"></div>
<div class="a" style="left:207px;top:718px;width:33px;height:2px;background:#76b9ed"></div>
<svg style="left:214px;top:697px" width="20" height="18"><path d="M1 4.5 L6 1.3 L17.5 4.5 L17 10 L11.5 11.5 L1 8 Z" fill="#0a0a0a"/><path d="M2 4.6 L6 2.2 L16.5 5.2 L16 7.2 L7 5.2 L2 6.4 Z" fill="#2f72c4"/><path d="M2 6.6 L7 5.4 L15.8 7.6 L15.6 9.6 L11.5 10.7 L2 7.8 Z" fill="#e8eef4"/><path d="M7.5 8 L2.5 12.5 M11.5 9.5 L6.5 14.5" stroke="#1f5fb0" stroke-width="1.5"/><path d="M5 15.5 L8.5 15.5 L6.5 13 Z" fill="#1f5fb0"/></svg>
<svg style="left:686px;top:699px" width="14" height="14"><defs><radialGradient id="sg" cx="40%" cy="35%" r="65%"><stop offset="0" stop-color="#ffc21a"/><stop offset="1" stop-color="#f08a00"/></radialGradient></defs><circle cx="7" cy="7" r="6.5" fill="url(#sg)"/></svg>
<div class="t" style="left:707px;top:703.68px;font-size:9px;line-height:9px;transform:scaleX(0.95);transform-origin:left;color:#fff">72°F</div>
<div class="t" style="left:733px;top:703.68px;font-size:9px;line-height:9px;transform:scaleX(0.95);transform-origin:left;color:#fff">Sunny</div>
<svg style="left:770px;top:702px" width="11" height="8"><path d="M1 6.5 L5.5 2 L10 6.5" stroke="#fff" stroke-width="1.1" fill="none"/></svg>
<svg style="left:789px;top:701px" width="11" height="11"><path d="M1 10 A9 9 0 0 1 10 1 M3.5 10 A6.5 6.5 0 0 1 10 3.5 M6 10 A4 4 0 0 1 10 6" stroke="#9aa3ad" stroke-width="0.9" fill="none"/><circle cx="9.2" cy="9.2" r="1" fill="#fff"/></svg>
<svg style="left:803px;top:700px" width="13" height="12"><path d="M0.5 4 H3 L6.5 1 V11 L3 8 H0.5 Z" fill="none" stroke="#fff" stroke-width="0.9"/><path d="M8.5 3.5 Q10 6 8.5 8.5 M10.5 2 Q13 6 10.5 10" stroke="#fff" stroke-width="0.9" fill="none"/></svg>
<div class="t" style="left:740px;width:200px;text-align:center;top:696.02px;font-size:8.6px;line-height:8.6px;transform:scaleX(0.92);color:#fff">4:33 PM</div>
<div class="t" style="left:740.5px;width:200px;text-align:center;top:709.02px;font-size:8.6px;line-height:8.6px;transform:scaleX(0.92);color:#fff">7/6/2022</div>
<svg style="left:871px;top:699px" width="16" height="16"><path d="M1 1 H12 V9 H5 L3 11 V9 H1 Z" fill="#fff"/><path d="M3 3.5 H10 M3 5.5 H10" stroke="#243341" stroke-width="0.8"/><circle cx="10.5" cy="11.5" r="4" fill="#243341" stroke="#fff" stroke-width="1"/><path d="M10.6 9.5 V13.6 M9.6 10.4 L10.6 9.5" stroke="#fff" stroke-width="1"/></svg>
<div class="a" style="left:896px;top:692px;width:1px;height:28px;background:#4a5560"></div>
</body></html>
